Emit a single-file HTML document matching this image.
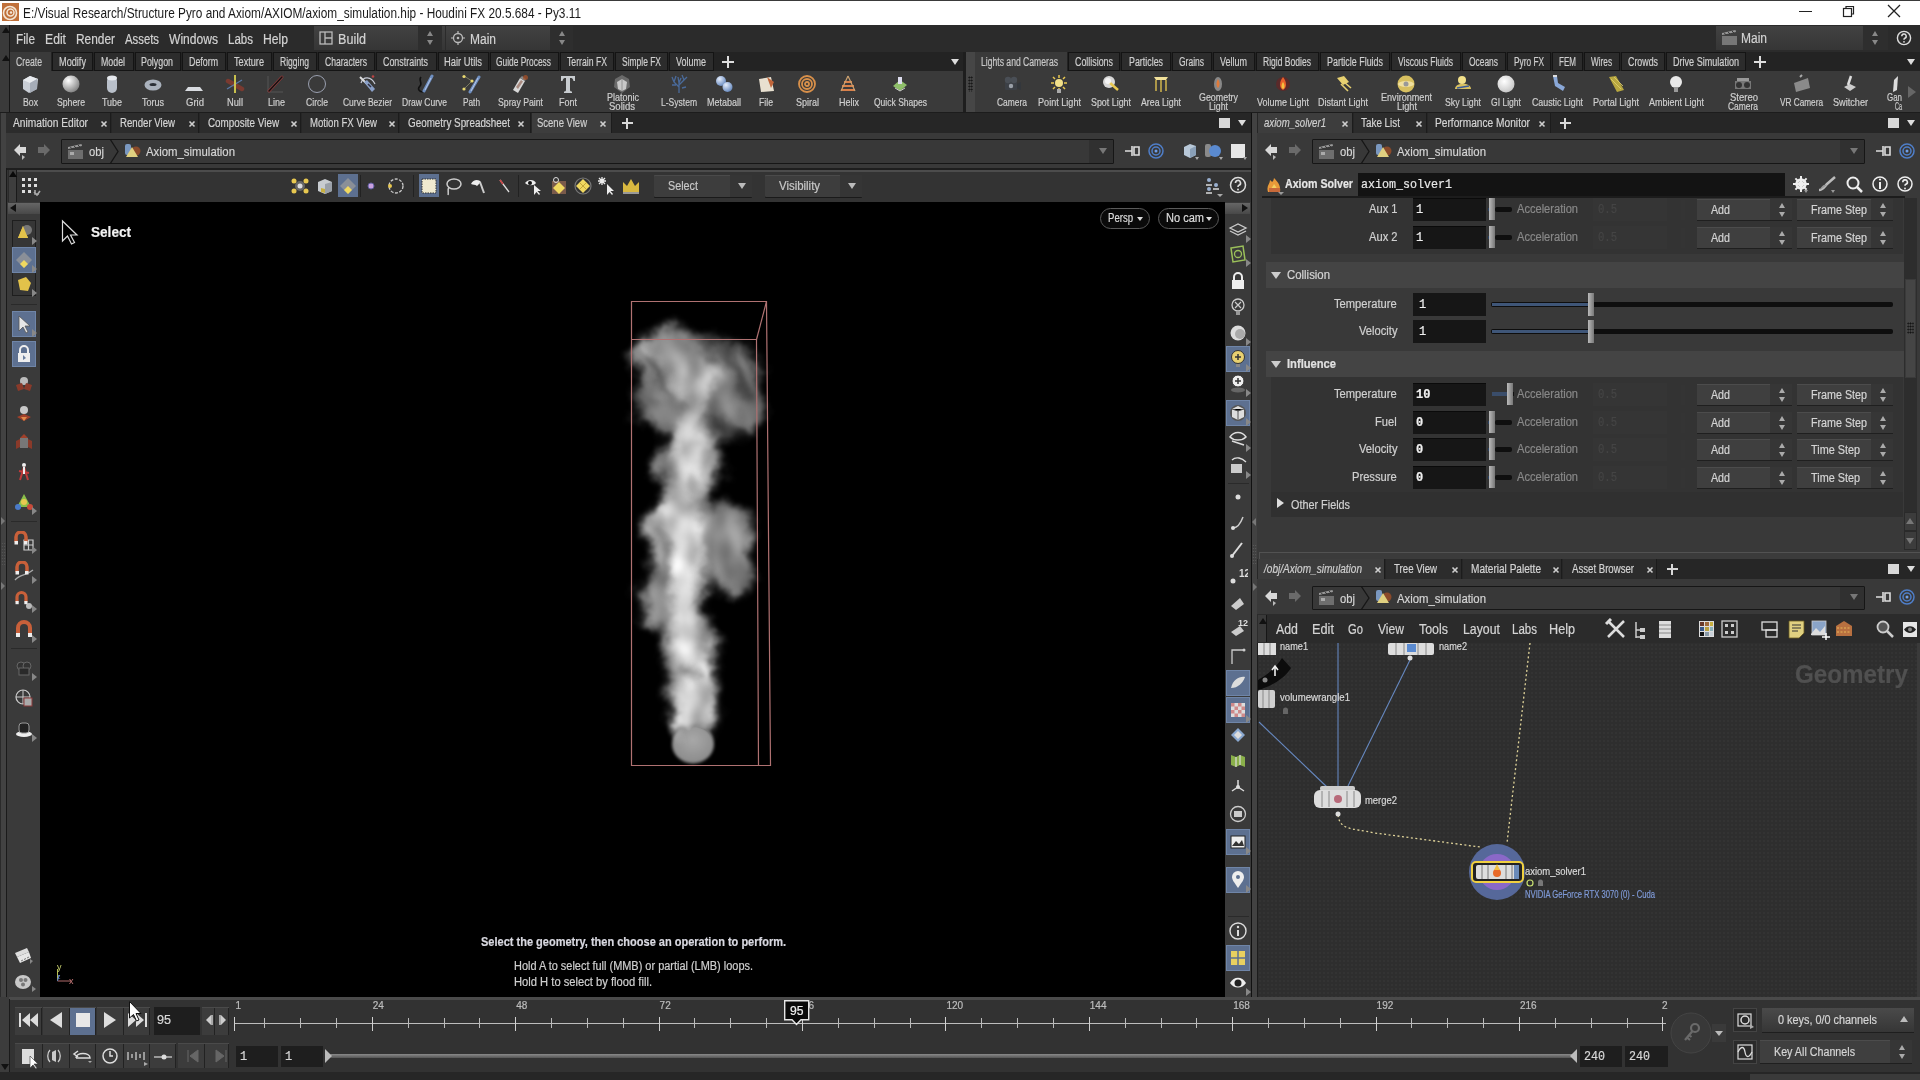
<!DOCTYPE html><html><head><meta charset="utf-8"><style>
html,body{margin:0;padding:0;width:1920px;height:1080px;overflow:hidden;background:#3a3a3a;font-family:"Liberation Sans",sans-serif}
.a{position:absolute}
.t{white-space:nowrap;transform-origin:0 50%;-webkit-text-stroke:0.2px currentColor}
.tri-up{width:0;height:0;border-left:4px solid transparent;border-right:4px solid transparent;border-bottom:6px solid #111}
.tri-dn{width:0;height:0;border-left:4px solid transparent;border-right:4px solid transparent;border-top:6px solid #111}
</style></head><body>
<div class="a" style="left:0px;top:0px;width:1920px;height:25px;background:#ffffff;"></div>
<div class="a" style="left:0px;top:0px;width:1920px;height:1px;background:#3a3a3a;"></div>
<svg class="a" style="left:2px;top:3px" width="17" height="18" viewBox="0 0 17 18"><rect width="17" height="18" fill="#c0703a"/><circle cx="8" cy="10" r="6.5" fill="none" stroke="#f3e6d6" stroke-width="1.6"/><circle cx="8.5" cy="9.5" r="3.5" fill="none" stroke="#f3e6d6" stroke-width="1.5"/><circle cx="9" cy="9.5" r="1.2" fill="#f3e6d6"/></svg>
<div class="a t" style="left:23.0px;top:4.5px;font-size:14px;line-height:16px;color:#1a1a1a;font-weight:normal;font-style:normal;font-family:'Liberation Sans', sans-serif;transform:scaleX(0.8453);-webkit-text-stroke:0;">E:/Visual Research/Structure Pyro and Axiom/AXIOM/axiom_simulation.hip - Houdini FX 20.5.684 - Py3.11</div>
<div class="a" style="left:1799px;top:11px;width:13px;height:1px;background:#222;"></div>
<svg class="a" style="left:1840px;top:3px" width="16" height="16" viewBox="0 0 16 16"><rect x="3.5" y="5.5" width="8" height="8" fill="none" stroke="#222" stroke-width="1.2"/><path d="M6 5.5V3.5h7.5V11h-2" fill="none" stroke="#222" stroke-width="1.2"/></svg>
<svg class="a" style="left:1886px;top:3px" width="16" height="16" viewBox="0 0 16 16"><path d="M2 2L14 14M14 2L2 14" stroke="#222" stroke-width="1.3"/></svg>
<div class="a" style="left:0px;top:25px;width:1920px;height:27px;background:#2b2b2b;"></div>
<div class="a" style="left:0px;top:25px;width:9px;height:27px;background:#3a3a3a;"></div>
<div class="a" style="left:9px;top:25px;width:1px;height:27px;background:#161616;"></div>
<div class="a tri-up" style="left:2px;top:27px"></div>
<div class="a t" style="left:16.0px;top:31.0px;font-size:14px;line-height:16px;color:#d2d2d2;font-weight:normal;font-style:normal;font-family:'Liberation Sans', sans-serif;transform:scaleX(0.8423);">File</div>
<div class="a t" style="left:45.0px;top:31.0px;font-size:14px;line-height:16px;color:#d2d2d2;font-weight:normal;font-style:normal;font-family:'Liberation Sans', sans-serif;transform:scaleX(0.8705);">Edit</div>
<div class="a t" style="left:76.0px;top:31.0px;font-size:14px;line-height:16px;color:#d2d2d2;font-weight:normal;font-style:normal;font-family:'Liberation Sans', sans-serif;transform:scaleX(0.8494);">Render</div>
<div class="a t" style="left:125.0px;top:31.0px;font-size:14px;line-height:16px;color:#d2d2d2;font-weight:normal;font-style:normal;font-family:'Liberation Sans', sans-serif;transform:scaleX(0.8093);">Assets</div>
<div class="a t" style="left:169.0px;top:31.0px;font-size:14px;line-height:16px;color:#d2d2d2;font-weight:normal;font-style:normal;font-family:'Liberation Sans', sans-serif;transform:scaleX(0.8628);">Windows</div>
<div class="a t" style="left:228.0px;top:31.0px;font-size:14px;line-height:16px;color:#d2d2d2;font-weight:normal;font-style:normal;font-family:'Liberation Sans', sans-serif;transform:scaleX(0.8236);">Labs</div>
<div class="a t" style="left:263.0px;top:31.0px;font-size:14px;line-height:16px;color:#d2d2d2;font-weight:normal;font-style:normal;font-family:'Liberation Sans', sans-serif;transform:scaleX(0.8683);">Help</div>
<div class="a" style="left:314px;top:26px;width:131px;height:24px;background:#3c3c3c;background:linear-gradient(#424242,#363636);"></div>
<div class="a" style="left:418px;top:26px;width:24px;height:24px;background:#2e2e2e;"></div>
<svg class="a" style="left:319px;top:31px" width="14" height="14" viewBox="0 0 14 14"><rect x="1" y="1" width="12" height="12" fill="none" stroke="#bbb" stroke-width="1.3"/><path d="M6 1V13M6 7H13" stroke="#bbb" stroke-width="1.3"/></svg>
<div class="a t" style="left:338.0px;top:31.0px;font-size:14px;line-height:16px;color:#d2d2d2;font-weight:normal;font-style:normal;font-family:'Liberation Sans', sans-serif;transform:scaleX(0.8994);">Build</div>
<div class="a" style="left:426.5px;top:31px;width:0;height:0;border-left:3.5px solid transparent;border-right:3.5px solid transparent;border-bottom:5px solid #888"></div>
<div class="a" style="left:426.5px;top:40px;width:0;height:0;border-left:3.5px solid transparent;border-right:3.5px solid transparent;border-top:5px solid #888"></div>
<div class="a" style="left:446px;top:26px;width:127px;height:24px;background:#3c3c3c;background:linear-gradient(#424242,#363636);"></div>
<div class="a" style="left:550px;top:26px;width:23px;height:24px;background:#2e2e2e;"></div>
<svg class="a" style="left:451px;top:31px" width="14" height="14" viewBox="0 0 14 14"><circle cx="7" cy="7" r="4.5" fill="none" stroke="#bbb" stroke-width="1.3"/><circle cx="7" cy="7" r="1.3" fill="#bbb"/><path d="M7 0V3M7 11V14M0 7H3M11 7H14" stroke="#bbb" stroke-width="1.2"/></svg>
<div class="a t" style="left:470.0px;top:31.0px;font-size:14px;line-height:16px;color:#d2d2d2;font-weight:normal;font-style:normal;font-family:'Liberation Sans', sans-serif;transform:scaleX(0.8569);">Main</div>
<div class="a" style="left:558.5px;top:31px;width:0;height:0;border-left:3.5px solid transparent;border-right:3.5px solid transparent;border-bottom:5px solid #888"></div>
<div class="a" style="left:558.5px;top:40px;width:0;height:0;border-left:3.5px solid transparent;border-right:3.5px solid transparent;border-top:5px solid #888"></div>
<div class="a" style="left:1716px;top:26px;width:172px;height:24px;background:#3c3c3c;background:linear-gradient(#424242,#363636);"></div>
<div class="a" style="left:1863px;top:26px;width:25px;height:24px;background:#2e2e2e;"></div>
<svg class="a" style="left:1721px;top:29px" width="17" height="17" viewBox="0 0 17 17"><rect x="1" y="7" width="15" height="9" fill="#777"/><path d="M1 6L15 3L14.5 1L1 4Z" fill="#999"/><path d="M3 3.6l2 2.2M7 2.8l2 2.2M11 2l2 2.2" stroke="#333" stroke-width="1"/></svg>
<div class="a t" style="left:1741.0px;top:30.0px;font-size:14px;line-height:16px;color:#d2d2d2;font-weight:normal;font-style:normal;font-family:'Liberation Sans', sans-serif;transform:scaleX(0.8569);">Main</div>
<div class="a" style="left:1871.5px;top:31px;width:0;height:0;border-left:3.5px solid transparent;border-right:3.5px solid transparent;border-bottom:5px solid #888"></div>
<div class="a" style="left:1871.5px;top:40px;width:0;height:0;border-left:3.5px solid transparent;border-right:3.5px solid transparent;border-top:5px solid #888"></div>
<svg class="a" style="left:1896px;top:30px" width="16" height="16" viewBox="0 0 16 16"><circle cx="8" cy="8" r="6.6" fill="none" stroke="#ddd" stroke-width="1.4"/><path d="M5.8 6.2a2.2 2.2 0 1 1 3 2c-.7.3-.8.7-.8 1.5" fill="none" stroke="#ddd" stroke-width="1.5"/><circle cx="8" cy="11.8" r=".9" fill="#ddd"/></svg>
<div class="a" style="left:0px;top:52px;width:1920px;height:19px;background:#232323;"></div>
<div class="a" style="left:0px;top:52px;width:9px;height:61px;background:#3a3a3a;"></div>
<div class="a" style="left:9px;top:52px;width:1px;height:61px;background:#161616;"></div>
<div class="a tri-up" style="left:2px;top:55px"></div>
<div class="a" style="left:10px;top:52px;width:41px;height:19px;background:#3a3a3a;"></div>
<div class="a t" style="left:16.0px;top:55.0px;font-size:12px;line-height:14px;color:#c8c8c8;font-weight:normal;font-style:normal;font-family:'Liberation Sans', sans-serif;transform:scaleX(0.7219);">Create</div>
<div class="a" style="left:52px;top:52px;width:41px;height:19px;background:#2c2c2c;box-shadow:inset 0 0 0 1px #141414;"></div>
<div class="a t" style="left:59.0px;top:55.0px;font-size:12px;line-height:14px;color:#cfcfcf;font-weight:normal;font-style:normal;font-family:'Liberation Sans', sans-serif;transform:scaleX(0.7640);">Modify</div>
<div class="a" style="left:94px;top:52px;width:40px;height:19px;background:#2c2c2c;box-shadow:inset 0 0 0 1px #141414;"></div>
<div class="a t" style="left:101.0px;top:55.0px;font-size:12px;line-height:14px;color:#cfcfcf;font-weight:normal;font-style:normal;font-family:'Liberation Sans', sans-serif;transform:scaleX(0.7344);">Model</div>
<div class="a" style="left:135px;top:52px;width:46px;height:19px;background:#2c2c2c;box-shadow:inset 0 0 0 1px #141414;"></div>
<div class="a t" style="left:141.0px;top:55.0px;font-size:12px;line-height:14px;color:#cfcfcf;font-weight:normal;font-style:normal;font-family:'Liberation Sans', sans-serif;transform:scaleX(0.7380);">Polygon</div>
<div class="a" style="left:182px;top:52px;width:44px;height:19px;background:#2c2c2c;box-shadow:inset 0 0 0 1px #141414;"></div>
<div class="a t" style="left:189.0px;top:55.0px;font-size:12px;line-height:14px;color:#cfcfcf;font-weight:normal;font-style:normal;font-family:'Liberation Sans', sans-serif;transform:scaleX(0.7372);">Deform</div>
<div class="a" style="left:227px;top:52px;width:45px;height:19px;background:#2c2c2c;box-shadow:inset 0 0 0 1px #141414;"></div>
<div class="a t" style="left:234.0px;top:55.0px;font-size:12px;line-height:14px;color:#cfcfcf;font-weight:normal;font-style:normal;font-family:'Liberation Sans', sans-serif;transform:scaleX(0.7624);">Texture</div>
<div class="a" style="left:273px;top:52px;width:44px;height:19px;background:#2c2c2c;box-shadow:inset 0 0 0 1px #141414;"></div>
<div class="a t" style="left:280.0px;top:55.0px;font-size:12px;line-height:14px;color:#cfcfcf;font-weight:normal;font-style:normal;font-family:'Liberation Sans', sans-serif;transform:scaleX(0.7127);">Rigging</div>
<div class="a" style="left:318px;top:52px;width:57px;height:19px;background:#2c2c2c;box-shadow:inset 0 0 0 1px #141414;"></div>
<div class="a t" style="left:325.0px;top:55.0px;font-size:12px;line-height:14px;color:#cfcfcf;font-weight:normal;font-style:normal;font-family:'Liberation Sans', sans-serif;transform:scaleX(0.7157);">Characters</div>
<div class="a" style="left:376px;top:52px;width:61px;height:19px;background:#2c2c2c;box-shadow:inset 0 0 0 1px #141414;"></div>
<div class="a t" style="left:383.0px;top:55.0px;font-size:12px;line-height:14px;color:#cfcfcf;font-weight:normal;font-style:normal;font-family:'Liberation Sans', sans-serif;transform:scaleX(0.7415);">Constraints</div>
<div class="a" style="left:438px;top:52px;width:51px;height:19px;background:#2c2c2c;box-shadow:inset 0 0 0 1px #141414;"></div>
<div class="a t" style="left:444.0px;top:55.0px;font-size:12px;line-height:14px;color:#cfcfcf;font-weight:normal;font-style:normal;font-family:'Liberation Sans', sans-serif;transform:scaleX(0.7808);">Hair Utils</div>
<div class="a" style="left:490px;top:52px;width:69px;height:19px;background:#2c2c2c;box-shadow:inset 0 0 0 1px #141414;"></div>
<div class="a t" style="left:496.0px;top:55.0px;font-size:12px;line-height:14px;color:#cfcfcf;font-weight:normal;font-style:normal;font-family:'Liberation Sans', sans-serif;transform:scaleX(0.6989);">Guide Process</div>
<div class="a" style="left:560px;top:52px;width:54px;height:19px;background:#2c2c2c;box-shadow:inset 0 0 0 1px #141414;"></div>
<div class="a t" style="left:567.0px;top:55.0px;font-size:12px;line-height:14px;color:#cfcfcf;font-weight:normal;font-style:normal;font-family:'Liberation Sans', sans-serif;transform:scaleX(0.7227);">Terrain FX</div>
<div class="a" style="left:615px;top:52px;width:53px;height:19px;background:#2c2c2c;box-shadow:inset 0 0 0 1px #141414;"></div>
<div class="a t" style="left:622.0px;top:55.0px;font-size:12px;line-height:14px;color:#cfcfcf;font-weight:normal;font-style:normal;font-family:'Liberation Sans', sans-serif;transform:scaleX(0.7047);">Simple FX</div>
<div class="a" style="left:669px;top:52px;width:45px;height:19px;background:#2c2c2c;box-shadow:inset 0 0 0 1px #141414;"></div>
<div class="a t" style="left:676.0px;top:55.0px;font-size:12px;line-height:14px;color:#cfcfcf;font-weight:normal;font-style:normal;font-family:'Liberation Sans', sans-serif;transform:scaleX(0.7496);">Volume</div>
<div class="a" style="left:722px;top:61.0px;width:12px;height:2px;background:#ddd"></div>
<div class="a" style="left:727.0px;top:56px;width:2px;height:12px;background:#ddd"></div>
<div class="a tri-dn" style="left:951px;top:59px;border-top-color:#ddd"></div>
<div class="a" style="left:963px;top:52px;width:3px;height:61px;background:#1e1e1e;"></div>
<div class="a" style="left:966px;top:52px;width:9px;height:61px;background:#464646;"></div>
<div class="a" style="left:968px;top:76px;width:5px;height:16px;background-image:radial-gradient(#111 45%,transparent 50%);background-size:2.5px 3px"></div>
<div class="a" style="left:975px;top:52px;width:92px;height:19px;background:#3a3a3a;"></div>
<div class="a t" style="left:981.0px;top:55.0px;font-size:12px;line-height:14px;color:#c8c8c8;font-weight:normal;font-style:normal;font-family:'Liberation Sans', sans-serif;transform:scaleX(0.7171);">Lights and Cameras</div>
<div class="a" style="left:1068px;top:52px;width:52px;height:19px;background:#2c2c2c;box-shadow:inset 0 0 0 1px #141414;"></div>
<div class="a t" style="left:1075.0px;top:55.0px;font-size:12px;line-height:14px;color:#cfcfcf;font-weight:normal;font-style:normal;font-family:'Liberation Sans', sans-serif;transform:scaleX(0.7400);">Collisions</div>
<div class="a" style="left:1121px;top:52px;width:50px;height:19px;background:#2c2c2c;box-shadow:inset 0 0 0 1px #141414;"></div>
<div class="a t" style="left:1129.0px;top:55.0px;font-size:12px;line-height:14px;color:#cfcfcf;font-weight:normal;font-style:normal;font-family:'Liberation Sans', sans-serif;transform:scaleX(0.7389);">Particles</div>
<div class="a" style="left:1172px;top:52px;width:40px;height:19px;background:#2c2c2c;box-shadow:inset 0 0 0 1px #141414;"></div>
<div class="a t" style="left:1179.0px;top:55.0px;font-size:12px;line-height:14px;color:#cfcfcf;font-weight:normal;font-style:normal;font-family:'Liberation Sans', sans-serif;transform:scaleX(0.7074);">Grains</div>
<div class="a" style="left:1213px;top:52px;width:42px;height:19px;background:#2c2c2c;box-shadow:inset 0 0 0 1px #141414;"></div>
<div class="a t" style="left:1220.0px;top:55.0px;font-size:12px;line-height:14px;color:#cfcfcf;font-weight:normal;font-style:normal;font-family:'Liberation Sans', sans-serif;transform:scaleX(0.7496);">Vellum</div>
<div class="a" style="left:1256px;top:52px;width:63px;height:19px;background:#2c2c2c;box-shadow:inset 0 0 0 1px #141414;"></div>
<div class="a t" style="left:1263.0px;top:55.0px;font-size:12px;line-height:14px;color:#cfcfcf;font-weight:normal;font-style:normal;font-family:'Liberation Sans', sans-serif;transform:scaleX(0.7125);">Rigid Bodies</div>
<div class="a" style="left:1320px;top:52px;width:70px;height:19px;background:#2c2c2c;box-shadow:inset 0 0 0 1px #141414;"></div>
<div class="a t" style="left:1327.0px;top:55.0px;font-size:12px;line-height:14px;color:#cfcfcf;font-weight:normal;font-style:normal;font-family:'Liberation Sans', sans-serif;transform:scaleX(0.7432);">Particle Fluids</div>
<div class="a" style="left:1391px;top:52px;width:70px;height:19px;background:#2c2c2c;box-shadow:inset 0 0 0 1px #141414;"></div>
<div class="a t" style="left:1398.0px;top:55.0px;font-size:12px;line-height:14px;color:#cfcfcf;font-weight:normal;font-style:normal;font-family:'Liberation Sans', sans-serif;transform:scaleX(0.7130);">Viscous Fluids</div>
<div class="a" style="left:1462px;top:52px;width:44px;height:19px;background:#2c2c2c;box-shadow:inset 0 0 0 1px #141414;"></div>
<div class="a t" style="left:1469.0px;top:55.0px;font-size:12px;line-height:14px;color:#cfcfcf;font-weight:normal;font-style:normal;font-family:'Liberation Sans', sans-serif;transform:scaleX(0.7013);">Oceans</div>
<div class="a" style="left:1507px;top:52px;width:44px;height:19px;background:#2c2c2c;box-shadow:inset 0 0 0 1px #141414;"></div>
<div class="a t" style="left:1514.0px;top:55.0px;font-size:12px;line-height:14px;color:#cfcfcf;font-weight:normal;font-style:normal;font-family:'Liberation Sans', sans-serif;transform:scaleX(0.6922);">Pyro FX</div>
<div class="a" style="left:1552px;top:52px;width:31px;height:19px;background:#2c2c2c;box-shadow:inset 0 0 0 1px #141414;"></div>
<div class="a t" style="left:1559.0px;top:55.0px;font-size:12px;line-height:14px;color:#cfcfcf;font-weight:normal;font-style:normal;font-family:'Liberation Sans', sans-serif;transform:scaleX(0.6712);">FEM</div>
<div class="a" style="left:1584px;top:52px;width:36px;height:19px;background:#2c2c2c;box-shadow:inset 0 0 0 1px #141414;"></div>
<div class="a t" style="left:1591.0px;top:55.0px;font-size:12px;line-height:14px;color:#cfcfcf;font-weight:normal;font-style:normal;font-family:'Liberation Sans', sans-serif;transform:scaleX(0.6849);">Wires</div>
<div class="a" style="left:1621px;top:52px;width:44px;height:19px;background:#2c2c2c;box-shadow:inset 0 0 0 1px #141414;"></div>
<div class="a t" style="left:1628.0px;top:55.0px;font-size:12px;line-height:14px;color:#cfcfcf;font-weight:normal;font-style:normal;font-family:'Liberation Sans', sans-serif;transform:scaleX(0.7376);">Crowds</div>
<div class="a" style="left:1666px;top:52px;width:80px;height:19px;background:#2c2c2c;box-shadow:inset 0 0 0 1px #141414;"></div>
<div class="a t" style="left:1673.0px;top:55.0px;font-size:12px;line-height:14px;color:#cfcfcf;font-weight:normal;font-style:normal;font-family:'Liberation Sans', sans-serif;transform:scaleX(0.7555);">Drive Simulation</div>
<div class="a" style="left:1754px;top:61.0px;width:12px;height:2px;background:#ddd"></div>
<div class="a" style="left:1759.0px;top:56px;width:2px;height:12px;background:#ddd"></div>
<div class="a tri-dn" style="left:1907px;top:59px;border-top-color:#ddd"></div>
<div class="a" style="left:10px;top:71px;width:953px;height:41px;background:#3a3a3a;"></div>
<div class="a" style="left:975px;top:71px;width:945px;height:41px;background:#3a3a3a;"></div>
<div class="a" style="left:0px;top:112px;width:1920px;height:1px;background:#1c1c1c;"></div>
<svg class="a" style="left:20px;top:74px" width="20" height="20" viewBox="0 0 20 20"><path d="M3 6L10 2L18 5L17 15L9 19L3 15Z" fill="#c9ced6"/><path d="M3 6L10 9L18 5L10 2Z" fill="#e8ebef"/><path d="M10 9V19L17 15V5Z" fill="#a6adb8"/></svg>
<div class="a t" style="left:23.0px;top:96.0px;font-size:11px;line-height:13px;color:#cfcfcf;font-weight:normal;font-style:normal;font-family:'Liberation Sans', sans-serif;transform:scaleX(0.7914);">Box</div>
<svg class="a" style="left:61px;top:74px" width="20" height="20" viewBox="0 0 20 20"><defs><radialGradient id="gs" cx=".35" cy=".3" r=".8"><stop offset="0" stop-color="#fff"/><stop offset="1" stop-color="#777"/></radialGradient></defs><circle cx="10" cy="10" r="8.5" fill="url(#gs)"/></svg>
<div class="a t" style="left:57.0px;top:96.0px;font-size:11px;line-height:13px;color:#cfcfcf;font-weight:normal;font-style:normal;font-family:'Liberation Sans', sans-serif;transform:scaleX(0.7894);">Sphere</div>
<svg class="a" style="left:102px;top:74px" width="20" height="20" viewBox="0 0 20 20"><rect x="5" y="2" width="10" height="17" rx="5" fill="#b9c0ca"/><ellipse cx="10" cy="4" rx="5" ry="2.5" fill="#e6e9ee"/></svg>
<div class="a t" style="left:102.0px;top:96.0px;font-size:11px;line-height:13px;color:#cfcfcf;font-weight:normal;font-style:normal;font-family:'Liberation Sans', sans-serif;transform:scaleX(0.8110);">Tube</div>
<svg class="a" style="left:143px;top:74px" width="20" height="20" viewBox="0 0 20 20"><ellipse cx="10" cy="11" rx="8.5" ry="5.5" fill="#a9b1bc"/><ellipse cx="10" cy="10.5" rx="3.5" ry="1.6" fill="#2a2f36"/></svg>
<div class="a t" style="left:142.0px;top:96.0px;font-size:11px;line-height:13px;color:#cfcfcf;font-weight:normal;font-style:normal;font-family:'Liberation Sans', sans-serif;transform:scaleX(0.8179);">Torus</div>
<svg class="a" style="left:184px;top:74px" width="20" height="20" viewBox="0 0 20 20"><path d="M4 13L16 13L19 17L1 17Z" fill="#d8dbe0"/></svg>
<div class="a t" style="left:186.0px;top:96.0px;font-size:11px;line-height:13px;color:#cfcfcf;font-weight:normal;font-style:normal;font-family:'Liberation Sans', sans-serif;transform:scaleX(0.8662);">Grid</div>
<svg class="a" style="left:225px;top:74px" width="20" height="20" viewBox="0 0 20 20"><path d="M3 7L17 15" stroke="#7a3a30" stroke-width="4.5" stroke-linecap="round"/><path d="M2 15L17 6" stroke="#5a78a8" stroke-width="1.3"/><path d="M10 1V19" stroke="#d8d050" stroke-width="1.8"/></svg>
<div class="a t" style="left:227.0px;top:96.0px;font-size:11px;line-height:13px;color:#cfcfcf;font-weight:normal;font-style:normal;font-family:'Liberation Sans', sans-serif;transform:scaleX(0.8444);">Null</div>
<svg class="a" style="left:266px;top:74px" width="20" height="20" viewBox="0 0 20 20"><path d="M2 2V18H17" fill="none" stroke="#555" stroke-width="1"/><path d="M3 17L16 3" stroke="#8a3a3a" stroke-width="3" stroke-linecap="round"/><path d="M3 17L16 3" stroke="#111" stroke-width="1.4" stroke-linecap="round"/></svg>
<div class="a t" style="left:268.0px;top:96.0px;font-size:11px;line-height:13px;color:#cfcfcf;font-weight:normal;font-style:normal;font-family:'Liberation Sans', sans-serif;transform:scaleX(0.8175);">Line</div>
<svg class="a" style="left:307px;top:74px" width="20" height="20" viewBox="0 0 20 20"><circle cx="10" cy="10" r="8.5" fill="none" stroke="#9aa0b0" stroke-width="1"/></svg>
<div class="a t" style="left:306.0px;top:96.0px;font-size:11px;line-height:13px;color:#cfcfcf;font-weight:normal;font-style:normal;font-family:'Liberation Sans', sans-serif;transform:scaleX(0.7826);">Circle</div>
<svg class="a" style="left:357px;top:74px" width="20" height="20" viewBox="0 0 20 20"><path d="M4 9C6 2 14 2 18 10" fill="none" stroke="#c8ccd8" stroke-width="1.2"/><path d="M3 3L13 13" stroke="#ddd" stroke-width="2"/><path d="M7 8L15 18L18 15L10 6Z" fill="#8aa0c8"/><path d="M11 10L14 13" stroke="#334" stroke-width="1.5"/><circle cx="16" cy="2.5" r="1.3" fill="#b44"/></svg>
<div class="a t" style="left:343.0px;top:96.0px;font-size:11px;line-height:13px;color:#cfcfcf;font-weight:normal;font-style:normal;font-family:'Liberation Sans', sans-serif;transform:scaleX(0.7707);">Curve Bezier</div>
<svg class="a" style="left:415px;top:74px" width="20" height="20" viewBox="0 0 20 20"><path d="M6 3C3 6 8 9 5 12C2 15 4 18 9 18" fill="none" stroke="#111" stroke-width="1.6"/><path d="M9 17L17 2" stroke="#6f8fc0" stroke-width="3" stroke-linecap="round"/><path d="M10 16L16 4" stroke="#b8c8e8" stroke-width="1"/></svg>
<div class="a t" style="left:402.0px;top:96.0px;font-size:11px;line-height:13px;color:#cfcfcf;font-weight:normal;font-style:normal;font-family:'Liberation Sans', sans-serif;transform:scaleX(0.7750);">Draw Curve</div>
<svg class="a" style="left:461px;top:74px" width="20" height="20" viewBox="0 0 20 20"><path d="M3 2L11 7L3 15" fill="none" stroke="#7a7a60" stroke-width="1"/><circle cx="3" cy="2.5" r="1.6" fill="#e8d870"/><circle cx="11" cy="7" r="1.6" fill="#e8d870"/><circle cx="3" cy="15" r="1.6" fill="#e8d870"/><path d="M9 18L18 3" stroke="#6f8fc0" stroke-width="3" stroke-linecap="round"/><path d="M10 17L17 4" stroke="#b8c8e8" stroke-width="1"/></svg>
<div class="a t" style="left:463.0px;top:96.0px;font-size:11px;line-height:13px;color:#cfcfcf;font-weight:normal;font-style:normal;font-family:'Liberation Sans', sans-serif;transform:scaleX(0.7513);">Path</div>
<svg class="a" style="left:510px;top:74px" width="20" height="20" viewBox="0 0 20 20"><path d="M3 16L10 4L15 7L8 19Z" fill="#d8d8d8"/><path d="M6 13L11 6L13 7.5L8 15Z" fill="#a88a80"/><path d="M10 4L15 7L16 5L12 2Z" fill="#888"/><circle cx="15.5" cy="3.5" r="2.5" fill="#a0502a" opacity=".8"/></svg>
<div class="a t" style="left:498.0px;top:96.0px;font-size:11px;line-height:13px;color:#cfcfcf;font-weight:normal;font-style:normal;font-family:'Liberation Sans', sans-serif;transform:scaleX(0.7914);">Spray Paint</div>
<svg class="a" style="left:558px;top:74px" width="20" height="20" viewBox="0 0 20 20"><path d="M3 2H17V7L15.5 7C15 4.5 14 4 12 4V16C12 17 13 17.5 14 17.5V19H6V17.5C7 17.5 8 17 8 16V4C6 4 5 4.5 4.5 7L3 7Z" fill="#c8ccd0"/></svg>
<div class="a t" style="left:559.0px;top:96.0px;font-size:11px;line-height:13px;color:#cfcfcf;font-weight:normal;font-style:normal;font-family:'Liberation Sans', sans-serif;transform:scaleX(0.8179);">Font</div>
<svg class="a" style="left:612px;top:74px" width="20" height="20" viewBox="0 0 20 20"><path d="M10 1L17 5L18 13L10 19L2 13L3 5Z" fill="#6a6a6a"/><path d="M10 5L15 8L14 15L10 17L6 15L5 8Z" fill="#c8c8c8"/><path d="M10 5V17" stroke="#888" stroke-width=".8"/></svg>
<div class="a t" style="left:607.0px;top:90.5px;font-size:11px;line-height:13px;color:#cfcfcf;font-weight:normal;font-style:normal;font-family:'Liberation Sans', sans-serif;transform:scaleX(0.8177);">Platonic</div>
<div class="a t" style="left:609.0px;top:100.0px;font-size:11px;line-height:13px;color:#cfcfcf;font-weight:normal;font-style:normal;font-family:'Liberation Sans', sans-serif;transform:scaleX(0.8678);">Solids</div>
<svg class="a" style="left:669px;top:74px" width="20" height="20" viewBox="0 0 20 20"><path d="M10 19V9M10 13L5 8M10 11L15 6M5 8L3 3M5 8L7 2M15 6L13 1M15 6L18 3M10 9L9 3M10 9L12 4M7 11L3 11M13 14L17 13" stroke="#4a6a9a" stroke-width="1.3" fill="none"/></svg>
<div class="a t" style="left:661.0px;top:96.0px;font-size:11px;line-height:13px;color:#cfcfcf;font-weight:normal;font-style:normal;font-family:'Liberation Sans', sans-serif;transform:scaleX(0.7750);">L-System</div>
<svg class="a" style="left:714px;top:74px" width="20" height="20" viewBox="0 0 20 20"><defs><radialGradient id="gm" cx=".35" cy=".3" r=".8"><stop offset="0" stop-color="#e6eefc"/><stop offset="1" stop-color="#5a7fb8"/></radialGradient></defs><circle cx="7" cy="7" r="5" fill="url(#gm)"/><circle cx="13.5" cy="13" r="5" fill="url(#gm)"/></svg>
<div class="a t" style="left:707.0px;top:96.0px;font-size:11px;line-height:13px;color:#cfcfcf;font-weight:normal;font-style:normal;font-family:'Liberation Sans', sans-serif;transform:scaleX(0.8178);">Metaball</div>
<svg class="a" style="left:756px;top:74px" width="20" height="20" viewBox="0 0 20 20"><path d="M3 5L15 3L18 17L5 18Z" fill="#e8e0d0"/><path d="M11 3L18 8L15 14Z" fill="#c0653a"/></svg>
<div class="a t" style="left:759.0px;top:96.0px;font-size:11px;line-height:13px;color:#cfcfcf;font-weight:normal;font-style:normal;font-family:'Liberation Sans', sans-serif;transform:scaleX(0.7899);">File</div>
<svg class="a" style="left:797px;top:74px" width="20" height="20" viewBox="0 0 20 20"><circle cx="10" cy="10" r="8" fill="none" stroke="#d8904a" stroke-width="1.8"/><circle cx="10" cy="10" r="5" fill="none" stroke="#d8904a" stroke-width="1.8"/><circle cx="10" cy="10" r="2" fill="none" stroke="#d8904a" stroke-width="1.8"/></svg>
<div class="a t" style="left:796.0px;top:96.0px;font-size:11px;line-height:13px;color:#cfcfcf;font-weight:normal;font-style:normal;font-family:'Liberation Sans', sans-serif;transform:scaleX(0.8179);">Spiral</div>
<svg class="a" style="left:838px;top:74px" width="20" height="20" viewBox="0 0 20 20"><path d="M10 2L3 16H17Z" fill="none"/><path d="M6 8H14M4 12H16M3 16H17" stroke="#d8804a" stroke-width="2"/><path d="M10 2L3 17M10 2L17 17" stroke="#caa070" stroke-width="1.2"/></svg>
<div class="a t" style="left:839.0px;top:96.0px;font-size:11px;line-height:13px;color:#cfcfcf;font-weight:normal;font-style:normal;font-family:'Liberation Sans', sans-serif;transform:scaleX(0.8180);">Helix</div>
<svg class="a" style="left:890px;top:74px" width="20" height="20" viewBox="0 0 20 20"><path d="M3 12L10 6L17 11L10 17Z" fill="#8fbf6a"/><path d="M8 3H12V10H8Z" fill="#dde"/><path d="M5 14L10 17L15 14" stroke="#ccc" stroke-width="1" fill="none"/></svg>
<div class="a t" style="left:874.0px;top:96.0px;font-size:11px;line-height:13px;color:#cfcfcf;font-weight:normal;font-style:normal;font-family:'Liberation Sans', sans-serif;transform:scaleX(0.7740);">Quick Shapes</div>
<svg class="a" style="left:1002px;top:74px" width="20" height="20" viewBox="0 0 20 20"><rect x="3" y="8" width="12" height="8" rx="1" fill="#3c4046"/><circle cx="6" cy="6" r="3.2" fill="#4a4f56"/><circle cx="12" cy="6" r="3.2" fill="#4a4f56"/><circle cx="9" cy="12" r="2.2" fill="#9aa0a8"/><path d="M15 10L19 8V16L15 14Z" fill="#33373c"/></svg>
<div class="a t" style="left:997.0px;top:96.0px;font-size:11px;line-height:13px;color:#cfcfcf;font-weight:normal;font-style:normal;font-family:'Liberation Sans', sans-serif;transform:scaleX(0.7669);">Camera</div>
<svg class="a" style="left:1049px;top:74px" width="20" height="20" viewBox="0 0 20 20"><circle cx="10" cy="9" r="4" fill="#f2e08a"/><path d="M10 1V4M10 14V17M2 9H5M15 9H18M4 3L6 5M14 13L16 15M16 3L14 5M4 15L6 13" stroke="#e8c850" stroke-width="1.5"/><rect x="8" y="15" width="4" height="4" fill="#aaa"/></svg>
<div class="a t" style="left:1038.0px;top:96.0px;font-size:11px;line-height:13px;color:#cfcfcf;font-weight:normal;font-style:normal;font-family:'Liberation Sans', sans-serif;transform:scaleX(0.8273);">Point Light</div>
<svg class="a" style="left:1101px;top:74px" width="20" height="20" viewBox="0 0 20 20"><circle cx="8" cy="8" r="6" fill="#d8d8d8"/><path d="M8 8L17 16" stroke="#e8c850" stroke-width="2.5"/><circle cx="7" cy="7" r="3" fill="#f4f4f4"/></svg>
<div class="a t" style="left:1091.0px;top:96.0px;font-size:11px;line-height:13px;color:#cfcfcf;font-weight:normal;font-style:normal;font-family:'Liberation Sans', sans-serif;transform:scaleX(0.8075);">Spot Light</div>
<svg class="a" style="left:1151px;top:74px" width="20" height="20" viewBox="0 0 20 20"><path d="M3 3H17L15 6H5Z" fill="#f0e09a"/><path d="M5 6V17M10 6V18M15 6V17" stroke="#e8c850" stroke-width="1.3"/></svg>
<div class="a t" style="left:1141.0px;top:96.0px;font-size:11px;line-height:13px;color:#cfcfcf;font-weight:normal;font-style:normal;font-family:'Liberation Sans', sans-serif;transform:scaleX(0.7977);">Area Light</div>
<svg class="a" style="left:1208px;top:74px" width="20" height="20" viewBox="0 0 20 20"><ellipse cx="10" cy="10" rx="4" ry="7" fill="#888"/><path d="M10 5C12 8 12 12 10 14C8 12 8 8 10 5Z" fill="#e07a3a"/></svg>
<div class="a t" style="left:1199.0px;top:90.5px;font-size:11px;line-height:13px;color:#cfcfcf;font-weight:normal;font-style:normal;font-family:'Liberation Sans', sans-serif;transform:scaleX(0.8076);">Geometry</div>
<div class="a t" style="left:1209.0px;top:100.0px;font-size:11px;line-height:13px;color:#cfcfcf;font-weight:normal;font-style:normal;font-family:'Liberation Sans', sans-serif;transform:scaleX(0.7966);">Light</div>
<svg class="a" style="left:1273px;top:74px" width="20" height="20" viewBox="0 0 20 20"><circle cx="10" cy="10" r="7" fill="#5a2a2a"/><path d="M10 3C14 8 14 14 10 16C6 14 6 8 10 3Z" fill="#e8602a"/><path d="M10 8C12 11 12 14 10 15C8 14 8 11 10 8Z" fill="#f4c040"/></svg>
<div class="a t" style="left:1257.0px;top:96.0px;font-size:11px;line-height:13px;color:#cfcfcf;font-weight:normal;font-style:normal;font-family:'Liberation Sans', sans-serif;transform:scaleX(0.8177);">Volume Light</div>
<svg class="a" style="left:1333px;top:74px" width="20" height="20" viewBox="0 0 20 20"><path d="M4 4L11 2L16 8L10 11Z" fill="#e6d070"/><path d="M8 10L15 17M11 8L18 14" stroke="#e6d070" stroke-width="1.6"/></svg>
<div class="a t" style="left:1318.0px;top:96.0px;font-size:11px;line-height:13px;color:#cfcfcf;font-weight:normal;font-style:normal;font-family:'Liberation Sans', sans-serif;transform:scaleX(0.8178);">Distant Light</div>
<svg class="a" style="left:1396px;top:74px" width="20" height="20" viewBox="0 0 20 20"><circle cx="10" cy="10" r="8.5" fill="#d8c060"/><ellipse cx="10" cy="10" rx="8" ry="3" fill="#f0e0a0"/><circle cx="10" cy="10" r="2.5" fill="#999"/></svg>
<div class="a t" style="left:1381.0px;top:90.5px;font-size:11px;line-height:13px;color:#cfcfcf;font-weight:normal;font-style:normal;font-family:'Liberation Sans', sans-serif;transform:scaleX(0.8259);">Environment</div>
<div class="a t" style="left:1397.0px;top:100.0px;font-size:11px;line-height:13px;color:#cfcfcf;font-weight:normal;font-style:normal;font-family:'Liberation Sans', sans-serif;transform:scaleX(0.8385);">Light</div>
<svg class="a" style="left:1453px;top:74px" width="20" height="20" viewBox="0 0 20 20"><path d="M2 15C2 8 18 8 18 15Z" fill="#d8c060"/><circle cx="9" cy="6" r="4" fill="#f2e08a"/><path d="M4 14L16 12" stroke="#3a5a9a" stroke-width="1.5"/></svg>
<div class="a t" style="left:1445.0px;top:96.0px;font-size:11px;line-height:13px;color:#cfcfcf;font-weight:normal;font-style:normal;font-family:'Liberation Sans', sans-serif;transform:scaleX(0.7957);">Sky Light</div>
<svg class="a" style="left:1496px;top:74px" width="20" height="20" viewBox="0 0 20 20"><defs><radialGradient id="gg" cx=".4" cy=".35" r=".8"><stop offset="0" stop-color="#fff"/><stop offset="1" stop-color="#bbb"/></radialGradient></defs><circle cx="10" cy="10" r="8.5" fill="url(#gg)"/></svg>
<div class="a t" style="left:1491.0px;top:96.0px;font-size:11px;line-height:13px;color:#cfcfcf;font-weight:normal;font-style:normal;font-family:'Liberation Sans', sans-serif;transform:scaleX(0.7788);">GI Light</div>
<svg class="a" style="left:1547px;top:74px" width="20" height="20" viewBox="0 0 20 20"><path d="M6 2L8 12L16 17L18 13L11 9L10 2Z" fill="#8aa8d8"/><path d="M6 2H10" stroke="#ddd" stroke-width="2"/></svg>
<div class="a t" style="left:1532.0px;top:96.0px;font-size:11px;line-height:13px;color:#cfcfcf;font-weight:normal;font-style:normal;font-family:'Liberation Sans', sans-serif;transform:scaleX(0.8021);">Caustic Light</div>
<svg class="a" style="left:1606px;top:74px" width="20" height="20" viewBox="0 0 20 20"><path d="M3 3L10 2L18 16L11 18Z" fill="#b8a840"/><path d="M5 5L15 15M8 3L17 12" stroke="#e0d070" stroke-width=".8"/></svg>
<div class="a t" style="left:1593.0px;top:96.0px;font-size:11px;line-height:13px;color:#cfcfcf;font-weight:normal;font-style:normal;font-family:'Liberation Sans', sans-serif;transform:scaleX(0.8267);">Portal Light</div>
<svg class="a" style="left:1666px;top:74px" width="20" height="20" viewBox="0 0 20 20"><circle cx="10" cy="8" r="6" fill="#e8e8e8"/><rect x="8" y="13" width="4" height="5" fill="#999"/></svg>
<div class="a t" style="left:1649.0px;top:96.0px;font-size:11px;line-height:13px;color:#cfcfcf;font-weight:normal;font-style:normal;font-family:'Liberation Sans', sans-serif;transform:scaleX(0.8177);">Ambient Light</div>
<svg class="a" style="left:1733px;top:74px" width="20" height="20" viewBox="0 0 20 20"><rect x="2" y="7" width="16" height="8" fill="#777"/><circle cx="6" cy="11" r="3" fill="#333"/><circle cx="14" cy="11" r="3" fill="#333"/><rect x="4" y="4" width="12" height="3" fill="#999"/></svg>
<div class="a t" style="left:1730.0px;top:90.5px;font-size:11px;line-height:13px;color:#cfcfcf;font-weight:normal;font-style:normal;font-family:'Liberation Sans', sans-serif;transform:scaleX(0.8640);">Stereo</div>
<div class="a t" style="left:1728.0px;top:100.0px;font-size:11px;line-height:13px;color:#cfcfcf;font-weight:normal;font-style:normal;font-family:'Liberation Sans', sans-serif;transform:scaleX(0.7669);">Camera</div>
<svg class="a" style="left:1792px;top:74px" width="20" height="20" viewBox="0 0 20 20"><path d="M2 9L16 4L18 14L4 18Z" fill="#8a8a8a"/><path d="M8 3L10 1" stroke="#aaa" stroke-width="2"/></svg>
<div class="a t" style="left:1780.0px;top:96.0px;font-size:11px;line-height:13px;color:#cfcfcf;font-weight:normal;font-style:normal;font-family:'Liberation Sans', sans-serif;transform:scaleX(0.7484);">VR Camera</div>
<svg class="a" style="left:1840px;top:74px" width="20" height="20" viewBox="0 0 20 20"><path d="M4 13L10 10L16 13L10 17Z" fill="#ccc"/><path d="M8 11L11 2" stroke="#ddd" stroke-width="2.5"/></svg>
<div class="a t" style="left:1833.0px;top:96.0px;font-size:11px;line-height:13px;color:#cfcfcf;font-weight:normal;font-style:normal;font-family:'Liberation Sans', sans-serif;transform:scaleX(0.8298);">Switcher</div>
<svg class="a" style="left:1885px;top:74px" width="20" height="20" viewBox="0 0 20 20"><path d="M8 18L9 6L13 2L12 16Z" fill="#ddd"/></svg>
<div class="a t" style="left:1887.0px;top:90.5px;font-size:11px;line-height:13px;color:#cfcfcf;font-weight:normal;font-style:normal;font-family:'Liberation Sans', sans-serif;transform:scaleX(0.7215);">Gan</div>
<div class="a t" style="left:1895.0px;top:100.0px;font-size:11px;line-height:13px;color:#cfcfcf;font-weight:normal;font-style:normal;font-family:'Liberation Sans', sans-serif;transform:scaleX(0.4978);">Ca</div>
<div class="a" style="left:1908px;top:86px;width:0;height:0;border-top:6px solid transparent;border-bottom:6px solid transparent;border-left:8px solid #666"></div>
<div class="a" style="left:0px;top:113px;width:6px;height:967px;background:#424242;"></div>
<div class="a" style="left:0px;top:113px;width:1px;height:884px;background:#2a2a2a;"></div>
<div class="a" style="left:6px;top:113px;width:1px;height:884px;background:#1a1a1a;"></div>
<div class="a" style="left:6px;top:113px;width:1245px;height:20px;background:#262626;"></div>
<div class="a" style="left:6px;top:113px;width:105px;height:20px;background:#2c2c2c;box-shadow:inset -1px 0 0 #1c1c1c;"></div>
<div class="a t" style="left:13.0px;top:116.0px;font-size:12px;line-height:14px;color:#d4d4d4;font-weight:normal;font-style:normal;font-family:'Liberation Sans', sans-serif;transform:scaleX(0.8519);">Animation Editor</div>
<svg class="a" style="left:100px;top:119.5px" width="8" height="8" viewBox="0 0 8 8"><path d="M1.5 1.5L6.5 6.5M6.5 1.5L1.5 6.5" stroke="#cfcfcf" stroke-width="1.6"/></svg>
<div class="a" style="left:112px;top:113px;width:87px;height:20px;background:#2c2c2c;box-shadow:inset -1px 0 0 #1c1c1c;"></div>
<div class="a t" style="left:120.0px;top:116.0px;font-size:12px;line-height:14px;color:#d4d4d4;font-weight:normal;font-style:normal;font-family:'Liberation Sans', sans-serif;transform:scaleX(0.8031);">Render View</div>
<svg class="a" style="left:188px;top:119.5px" width="8" height="8" viewBox="0 0 8 8"><path d="M1.5 1.5L6.5 6.5M6.5 1.5L1.5 6.5" stroke="#cfcfcf" stroke-width="1.6"/></svg>
<div class="a" style="left:200px;top:113px;width:101px;height:20px;background:#2c2c2c;box-shadow:inset -1px 0 0 #1c1c1c;"></div>
<div class="a t" style="left:208.0px;top:116.0px;font-size:12px;line-height:14px;color:#d4d4d4;font-weight:normal;font-style:normal;font-family:'Liberation Sans', sans-serif;transform:scaleX(0.8210);">Composite View</div>
<svg class="a" style="left:290px;top:119.5px" width="8" height="8" viewBox="0 0 8 8"><path d="M1.5 1.5L6.5 6.5M6.5 1.5L1.5 6.5" stroke="#cfcfcf" stroke-width="1.6"/></svg>
<div class="a" style="left:302px;top:113px;width:97px;height:20px;background:#2c2c2c;box-shadow:inset -1px 0 0 #1c1c1c;"></div>
<div class="a t" style="left:310.0px;top:116.0px;font-size:12px;line-height:14px;color:#d4d4d4;font-weight:normal;font-style:normal;font-family:'Liberation Sans', sans-serif;transform:scaleX(0.7994);">Motion FX View</div>
<svg class="a" style="left:388px;top:119.5px" width="8" height="8" viewBox="0 0 8 8"><path d="M1.5 1.5L6.5 6.5M6.5 1.5L1.5 6.5" stroke="#cfcfcf" stroke-width="1.6"/></svg>
<div class="a" style="left:400px;top:113px;width:131px;height:20px;background:#2c2c2c;box-shadow:inset -1px 0 0 #1c1c1c;"></div>
<div class="a t" style="left:408.0px;top:116.0px;font-size:12px;line-height:14px;color:#d4d4d4;font-weight:normal;font-style:normal;font-family:'Liberation Sans', sans-serif;transform:scaleX(0.8222);">Geometry Spreadsheet</div>
<svg class="a" style="left:517px;top:119.5px" width="8" height="8" viewBox="0 0 8 8"><path d="M1.5 1.5L6.5 6.5M6.5 1.5L1.5 6.5" stroke="#cfcfcf" stroke-width="1.6"/></svg>
<div class="a" style="left:532px;top:113px;width:80px;height:20px;background:#3d3d3d;box-shadow:inset -1px 0 0 #1c1c1c;"></div>
<div class="a t" style="left:537.0px;top:116.0px;font-size:12px;line-height:14px;color:#cfcfcf;font-weight:normal;font-style:normal;font-family:'Liberation Sans', sans-serif;transform:scaleX(0.7918);">Scene View</div>
<svg class="a" style="left:599px;top:119.5px" width="8" height="8" viewBox="0 0 8 8"><path d="M1.5 1.5L6.5 6.5M6.5 1.5L1.5 6.5" stroke="#cfcfcf" stroke-width="1.6"/></svg>
<div class="a" style="left:621.5px;top:122.0px;width:11.0px;height:2px;background:#d8d8d8"></div>
<div class="a" style="left:626.0px;top:117.5px;width:2px;height:11.0px;background:#d8d8d8"></div>
<div class="a" style="left:1219px;top:118.0px;width:11px;height:10.0px;background:#d8d8d8;"></div>
<div class="a tri-dn" style="left:1238px;top:120.0px;border-top-color:#ddd"></div>
<div class="a" style="left:1257px;top:113px;width:663px;height:20px;background:#262626;"></div>
<div class="a" style="left:1258px;top:113px;width:95px;height:20px;background:#3d3d3d;box-shadow:inset -1px 0 0 #1c1c1c;"></div>
<div class="a t" style="left:1264.0px;top:116.0px;font-size:12px;line-height:14px;color:#cfcfcf;font-weight:normal;font-style:italic;font-family:'Liberation Sans', sans-serif;transform:scaleX(0.8014);">axiom_solver1</div>
<svg class="a" style="left:1341px;top:119.5px" width="8" height="8" viewBox="0 0 8 8"><path d="M1.5 1.5L6.5 6.5M6.5 1.5L1.5 6.5" stroke="#cfcfcf" stroke-width="1.6"/></svg>
<div class="a" style="left:1354px;top:113px;width:73px;height:20px;background:#2c2c2c;box-shadow:inset -1px 0 0 #1c1c1c;"></div>
<div class="a t" style="left:1361.0px;top:116.0px;font-size:12px;line-height:14px;color:#d4d4d4;font-weight:normal;font-style:normal;font-family:'Liberation Sans', sans-serif;transform:scaleX(0.8236);">Take List</div>
<svg class="a" style="left:1415px;top:119.5px" width="8" height="8" viewBox="0 0 8 8"><path d="M1.5 1.5L6.5 6.5M6.5 1.5L1.5 6.5" stroke="#cfcfcf" stroke-width="1.6"/></svg>
<div class="a" style="left:1428px;top:113px;width:123px;height:20px;background:#2c2c2c;box-shadow:inset -1px 0 0 #1c1c1c;"></div>
<div class="a t" style="left:1435.0px;top:116.0px;font-size:12px;line-height:14px;color:#d4d4d4;font-weight:normal;font-style:normal;font-family:'Liberation Sans', sans-serif;transform:scaleX(0.8479);">Performance Monitor</div>
<svg class="a" style="left:1538px;top:119.5px" width="8" height="8" viewBox="0 0 8 8"><path d="M1.5 1.5L6.5 6.5M6.5 1.5L1.5 6.5" stroke="#cfcfcf" stroke-width="1.6"/></svg>
<div class="a" style="left:1559.5px;top:122.0px;width:11.0px;height:2px;background:#d8d8d8"></div>
<div class="a" style="left:1564.0px;top:117.5px;width:2px;height:11.0px;background:#d8d8d8"></div>
<div class="a" style="left:1888px;top:118.0px;width:11px;height:10.0px;background:#d8d8d8;"></div>
<div class="a tri-dn" style="left:1907px;top:120.0px;border-top-color:#ddd"></div>
<div class="a" style="left:1251px;top:113px;width:6px;height:887px;background:#424242;"></div>
<div class="a" style="left:1251px;top:113px;width:1px;height:887px;background:#111;"></div>
<div class="a" style="left:7px;top:133px;width:1244px;height:35px;background:#393939;"></div>
<div class="a" style="left:6px;top:133px;width:1245px;height:35px;background:#393939;"></div>
<svg class="a" style="left:13px;top:142.5px" width="40" height="18" viewBox="0 0 40 18"><path d="M1 7L7 1V4H13V10H7V13Z" fill="#d8d8d8"/><path d="M9 12L12 14L9 17Z" fill="#bbb"/><path d="M37 7L31 1V4H25V10H31V13Z" fill="#6a6a6a"/></svg>
<div class="a" style="left:61px;top:139px;width:1053px;height:25px;background:#383838;border:1px solid #161616;box-sizing:border-box;border-radius:1px;"></div>
<svg class="a" style="left:67px;top:142.5px" width="17" height="17" viewBox="0 0 17 17"><rect x="1" y="7" width="15" height="9" fill="#6e6e6e"/><path d="M1 6L15 3L14.5 1L1 4Z" fill="#9a9a9a"/><path d="M3 3.6l2 2.2M7 2.8l2 2.2M11 2l2 2.2" stroke="#333" stroke-width="1"/><rect x="3" y="9" width="4" height="3" fill="#aaa"/></svg>
<div class="a t" style="left:89.0px;top:144.3px;font-size:13px;line-height:15px;color:#d4d4d4;font-weight:normal;font-style:normal;font-family:'Liberation Sans', sans-serif;transform:scaleX(0.8647);">obj</div>
<svg class="a" style="left:109px;top:139px" width="10" height="25" viewBox="0 0 10 25" preserveAspectRatio="none"><path d="M1 0L9 12.5L1 25" fill="none" stroke="#161616" stroke-width="1.3"/></svg>
<svg class="a" style="left:123px;top:141.5px" width="18" height="18" viewBox="0 0 18 18"><circle cx="13" cy="9" r="4.5" fill="#8a4a2a"/><rect x="2" y="2" width="6" height="11" rx="2" fill="#7a98c0"/><path d="M9 5L15 15H3Z" fill="#e0d080"/></svg>
<div class="a t" style="left:146.0px;top:144.3px;font-size:13px;line-height:15px;color:#d4d4d4;font-weight:normal;font-style:normal;font-family:'Liberation Sans', sans-serif;transform:scaleX(0.8737);">Axiom_simulation</div>
<div class="a" style="left:1089px;top:140px;width:24px;height:23px;background:#303030;"></div>
<div class="a tri-dn" style="left:1099px;top:147.5px;border-top-color:#777"></div>
<svg class="a" style="left:1124px;top:142.5px" width="16" height="16" viewBox="0 0 16 16"><path d="M1 8H8M8 3V13M10 4H15V12H10Z" stroke="#ddd" stroke-width="1.6" fill="none"/></svg>
<svg class="a" style="left:1148px;top:142.5px" width="16" height="16" viewBox="0 0 16 16"><circle cx="8" cy="8" r="7" fill="none" stroke="#4f7ec8" stroke-width="1.5"/><circle cx="8" cy="8" r="4" fill="none" stroke="#4f7ec8" stroke-width="1.5"/><circle cx="8" cy="8" r="1.5" fill="#6f9ee8"/></svg>
<div class="a" style="left:1257px;top:133px;width:663px;height:35px;background:#393939;"></div>
<div class="a" style="left:1257px;top:133px;width:663px;height:35px;background:#393939;"></div>
<svg class="a" style="left:1264px;top:142.5px" width="40" height="18" viewBox="0 0 40 18"><path d="M1 7L7 1V4H13V10H7V13Z" fill="#d8d8d8"/><path d="M9 12L12 14L9 17Z" fill="#bbb"/><path d="M37 7L31 1V4H25V10H31V13Z" fill="#6a6a6a"/></svg>
<div class="a" style="left:1312px;top:139px;width:553px;height:25px;background:#383838;border:1px solid #161616;box-sizing:border-box;border-radius:1px;"></div>
<svg class="a" style="left:1318px;top:142.5px" width="17" height="17" viewBox="0 0 17 17"><rect x="1" y="7" width="15" height="9" fill="#6e6e6e"/><path d="M1 6L15 3L14.5 1L1 4Z" fill="#9a9a9a"/><path d="M3 3.6l2 2.2M7 2.8l2 2.2M11 2l2 2.2" stroke="#333" stroke-width="1"/><rect x="3" y="9" width="4" height="3" fill="#aaa"/></svg>
<div class="a t" style="left:1340.0px;top:144.3px;font-size:13px;line-height:15px;color:#d4d4d4;font-weight:normal;font-style:normal;font-family:'Liberation Sans', sans-serif;transform:scaleX(0.8647);">obj</div>
<svg class="a" style="left:1360px;top:139px" width="10" height="25" viewBox="0 0 10 25" preserveAspectRatio="none"><path d="M1 0L9 12.5L1 25" fill="none" stroke="#161616" stroke-width="1.3"/></svg>
<svg class="a" style="left:1374px;top:141.5px" width="18" height="18" viewBox="0 0 18 18"><circle cx="13" cy="9" r="4.5" fill="#8a4a2a"/><rect x="2" y="2" width="6" height="11" rx="2" fill="#7a98c0"/><path d="M9 5L15 15H3Z" fill="#e0d080"/></svg>
<div class="a t" style="left:1397.0px;top:144.3px;font-size:13px;line-height:15px;color:#d4d4d4;font-weight:normal;font-style:normal;font-family:'Liberation Sans', sans-serif;transform:scaleX(0.8737);">Axiom_simulation</div>
<div class="a" style="left:1840px;top:140px;width:24px;height:23px;background:#303030;"></div>
<div class="a tri-dn" style="left:1850px;top:147.5px;border-top-color:#777"></div>
<svg class="a" style="left:1875px;top:142.5px" width="16" height="16" viewBox="0 0 16 16"><path d="M1 8H8M8 3V13M10 4H15V12H10Z" stroke="#ddd" stroke-width="1.6" fill="none"/></svg>
<svg class="a" style="left:1899px;top:142.5px" width="16" height="16" viewBox="0 0 16 16"><circle cx="8" cy="8" r="7" fill="none" stroke="#4f7ec8" stroke-width="1.5"/><circle cx="8" cy="8" r="4" fill="none" stroke="#4f7ec8" stroke-width="1.5"/><circle cx="8" cy="8" r="1.5" fill="#6f9ee8"/></svg>
<svg class="a" style="left:1181px;top:142px" width="70" height="20" viewBox="0 0 70 20"><path d="M3 5L9 2L15 4L15 13L9 16L3 13Z" fill="#b8c8d8"/><path d="M9 7V16L15 13V4Z" fill="#8aa0b8"/><path d="M14 15L18 15L16 18Z" fill="#aaa"/><rect x="24" y="2" width="6" height="13" rx="2" fill="#8a8a8a"/><circle cx="34" cy="9" r="6" fill="#5a8ad0"/><path d="M38 15L42 15L40 18Z" fill="#aaa"/><rect x="50" y="2" width="14" height="14" fill="#e6e6e6"/><path d="M62 15L66 15L64 18Z" fill="#aaa"/></svg>
<div class="a" style="left:7px;top:168px;width:1244px;height:34px;background:#333333;"></div>
<div class="a" style="left:7px;top:168px;width:1244px;height:2px;background:#1e1e1e;"></div>
<div class="a" style="left:17px;top:170px;width:1234px;height:1.5px;background:#4c4c4c;"></div>
<div class="a" style="left:8px;top:170px;width:9px;height:32px;background:#3e3e3e;box-shadow:inset -1px 0 0 #1a1a1a, inset 1px 0 0 #2a2a2a;"></div>
<div class="a tri-up" style="left:8.5px;top:171px;border-bottom-color:#0a0a0a"></div>
<svg class="a" style="left:20px;top:176px" width="22" height="22" viewBox="0 0 22 22"><g fill="#ddd"><rect x="2" y="2" width="3" height="3"/><rect x="8" y="2" width="3" height="3"/><rect x="14" y="2" width="3" height="3"/><rect x="2" y="8" width="3" height="3"/><rect x="8" y="8" width="3" height="3"/><rect x="14" y="8" width="3" height="3"/><rect x="2" y="14" width="3" height="3"/><rect x="8" y="14" width="3" height="3"/></g><path d="M15 14V18H19M14 16L17 19L20 15" fill="none" stroke="#aaa" stroke-width="1.6"/></svg>
<div class="a" style="left:338px;top:174px;width:20px;height:23px;background:#5d7090;"></div>
<div class="a" style="left:419px;top:174px;width:20px;height:23px;background:#5d7090;"></div>
<div class="a" style="left:360px;top:175px;width:1px;height:22px;background:#222;"></div>
<div class="a" style="left:413px;top:175px;width:1px;height:22px;background:#222;"></div>
<div class="a" style="left:518px;top:175px;width:1px;height:22px;background:#222;"></div>
<svg class="a" style="left:290px;top:176px" width="20" height="20" viewBox="0 0 20 20"><circle cx="10" cy="10" r="5" fill="#666"/><circle cx="4" cy="5" r="2.5" fill="#e8c850"/><circle cx="16" cy="5" r="2.5" fill="#e8c850"/><circle cx="4" cy="15" r="2.5" fill="#e8c850"/><circle cx="16" cy="15" r="2.5" fill="#e8c850"/><circle cx="10" cy="10" r="2.5" fill="#ddd"/></svg>
<svg class="a" style="left:315px;top:176px" width="20" height="20" viewBox="0 0 20 20"><path d="M3 6L10 3L17 6V15L10 18L3 15Z" fill="#c8ccd0"/><path d="M10 8V18L17 15V6Z" fill="#9aa0a8"/><path d="M6 12L10 13V17L6 16Z" fill="#c8b040"/></svg>
<svg class="a" style="left:338px;top:176px" width="20" height="20" viewBox="0 0 20 20"><path d="M10 2L18 10L10 18L2 10Z" fill="#8a8f98"/><path d="M10 10L14 14L10 18L6 14Z" fill="#f0d860"/></svg>
<svg class="a" style="left:361px;top:176px" width="20" height="20" viewBox="0 0 20 20"><circle cx="10" cy="10" r="3" fill="#c9a0e0" stroke="#6060a0"/></svg>
<svg class="a" style="left:386px;top:176px" width="20" height="20" viewBox="0 0 20 20"><circle cx="10" cy="10" r="7" fill="none" stroke="#ccc" stroke-width="1.3" stroke-dasharray="3 1.5"/><circle cx="4" cy="10" r="2" fill="#e8c850"/></svg>
<svg class="a" style="left:419px;top:176px" width="20" height="20" viewBox="0 0 20 20"><rect x="3" y="3" width="14" height="14" fill="#f0ead0" stroke="#333" stroke-dasharray="1.5 1"/></svg>
<svg class="a" style="left:443px;top:176px" width="20" height="20" viewBox="0 0 20 20"><ellipse cx="11" cy="8" rx="7" ry="5" fill="none" stroke="#ccc" stroke-width="1.5"/><path d="M6 11C4 14 6 17 5 19" stroke="#ccc" stroke-width="1.5" fill="none"/></svg>
<svg class="a" style="left:468px;top:176px" width="20" height="20" viewBox="0 0 20 20"><path d="M3 8C5 3 11 3 13 6L9 10C7 8 5 9 3 8Z" fill="#eee"/><path d="M12 6L16 17" stroke="#ccc" stroke-width="2"/></svg>
<svg class="a" style="left:494px;top:176px" width="20" height="20" viewBox="0 0 20 20"><path d="M6 4L15 16" stroke="#ddd" stroke-width="1.3"/><path d="M6 4L9 8" stroke="#c44" stroke-width="1.5"/></svg>
<svg class="a" style="left:523px;top:176px" width="20" height="20" viewBox="0 0 20 20"><path d="M2 7C5 3 11 3 13 7C11 10 5 10 2 7Z" fill="#eee"/><circle cx="7" cy="7" r="2" fill="#111"/><path d="M11 9V19L13.5 16L16 19L17 18L14.5 15H18Z" fill="#eee"/></svg>
<svg class="a" style="left:549px;top:176px" width="20" height="20" viewBox="0 0 20 20"><rect x="3" y="5" width="14" height="13" fill="#7a5a4a"/><path d="M10 6L16 12L10 18L4 12Z" fill="#f0d860"/><circle cx="7" cy="4" r="2.5" fill="none" stroke="#ddd"/></svg>
<svg class="a" style="left:573px;top:176px" width="20" height="20" viewBox="0 0 20 20"><circle cx="10" cy="10" r="8" fill="#333" stroke="#777" stroke-width="1.2"/><path d="M10 3L17 10L10 17L3 10Z" fill="#f0d860"/><path d="M6.5 6.5L13.5 13.5M13.5 6.5L6.5 13.5" stroke="#b89a30" stroke-width=".8"/></svg>
<svg class="a" style="left:597px;top:176px" width="20" height="20" viewBox="0 0 20 20"><path d="M5 1V9M1 5H9M2 2L8 8M8 2L2 8" stroke="#eee" stroke-width="1.3"/><path d="M10 8V19L12.5 16L15 19L16 18L13.5 15H17Z" fill="#eee"/></svg>
<svg class="a" style="left:621px;top:176px" width="20" height="20" viewBox="0 0 20 20"><path d="M2 17V6L6 10L10 3L14 10L18 6V17Z" fill="#d8b840"/><path d="M2 17H18" stroke="#999" stroke-width="2"/></svg>
<div class="a" style="left:654px;top:175px;width:98px;height:22px;background:#3d3d3d;box-shadow:0 1px 0 #1a1a1a, inset 0 1px 0 #4a4a4a;border-radius:1px;"></div>
<div class="a" style="left:730px;top:175px;width:22px;height:22px;background:#353535;"></div>
<div class="a t" style="left:668.0px;top:178.5px;font-size:12px;line-height:14px;color:#c8c8c8;font-weight:normal;font-style:normal;font-family:'Liberation Sans', sans-serif;transform:scaleX(0.8995);">Select</div>
<div class="a tri-dn" style="left:738px;top:183px;border-top-color:#bbb"></div>
<div class="a" style="left:765px;top:175px;width:97px;height:22px;background:#3d3d3d;box-shadow:0 1px 0 #1a1a1a, inset 0 1px 0 #4a4a4a;border-radius:1px;"></div>
<div class="a" style="left:840px;top:175px;width:22px;height:22px;background:#353535;"></div>
<div class="a t" style="left:779.0px;top:178.5px;font-size:12px;line-height:14px;color:#c8c8c8;font-weight:normal;font-style:normal;font-family:'Liberation Sans', sans-serif;transform:scaleX(0.9507);">Visibility</div>
<div class="a tri-dn" style="left:848px;top:183px;border-top-color:#bbb"></div>
<svg class="a" style="left:1204px;top:176px" width="22" height="22" viewBox="0 0 22 22"><circle cx="5" cy="4" r="2" fill="#9ab0d0"/><path d="M2 9H8" stroke="#ddd" stroke-width="1.5"/><circle cx="12" cy="9" r="2" fill="#9ab0d0"/><path d="M9 13H15" stroke="#ddd" stroke-width="1.5"/><circle cx="5" cy="13" r="2" fill="#9ab0d0"/><path d="M2 17H8" stroke="#ddd" stroke-width="1.5"/><path d="M13 18H19L16 21Z" fill="#aaa"/></svg>
<svg class="a" style="left:1229px;top:176px" width="18" height="18" viewBox="0 0 18 18"><circle cx="9" cy="9" r="7.5" fill="none" stroke="#ddd" stroke-width="1.5"/><path d="M6.5 7a2.5 2.5 0 1 1 3.4 2.3c-.8.3-.9.8-.9 1.7" fill="none" stroke="#ddd" stroke-width="1.7"/><circle cx="9" cy="13.5" r="1" fill="#ddd"/></svg>
<div class="a" style="left:7px;top:202px;width:33px;height:795px;background:#3a3a3a;"></div>
<div class="a" style="left:8px;top:203px;width:32px;height:11px;background:#555;background:linear-gradient(#666,#484848);"></div>
<div class="a" style="left:10px;top:204px;width:0;height:0;border-top:4.5px solid transparent;border-bottom:4.5px solid transparent;border-right:6px solid #111"></div>
<div class="a" style="left:12px;top:220px;width:24px;height:76px;background:#363636;box-shadow:inset 0 0 0 1px #1e1e1e;"></div>
<div class="a" style="left:11px;top:304px;width:26px;height:1px;background:#2a2a2a;"></div>
<div class="a" style="left:1px;top:517px;width:0;height:0;border-top:4px solid transparent;border-bottom:4px solid transparent;border-left:4px solid #777"></div>
<div class="a" style="left:1px;top:582px;width:0;height:0;border-top:4px solid transparent;border-bottom:4px solid transparent;border-left:4px solid #777"></div>
<div class="a" style="left:1px;top:542px;width:5px;height:24px;background-image:radial-gradient(#5a5a5a 40%,transparent 45%);background-size:2.5px 3px"></div>
<div class="a" style="left:11px;top:521px;width:26px;height:1px;background:#2a2a2a;"></div>
<div class="a" style="left:11px;top:648px;width:26px;height:1px;background:#2a2a2a;"></div>
<svg class="a" style="left:14px;top:222px" width="20" height="20" viewBox="0 0 20 20"><path d="M4 16L9 4L14 16Z" fill="#e2c24a"/><circle cx="13" cy="8" r="5" fill="#777"/><path d="M4 16L9 4L14 16Z" fill="#e2c24a"/></svg>
<div class="a" style="left:32px;top:237px;width:0;height:0;border-top:4px solid transparent;border-bottom:4px solid transparent;border-left:5px solid #888"></div>
<div class="a" style="left:12px;top:247px;width:24px;height:26px;background:#5d7090;box-shadow:inset 0 0 0 1px #6f85a8;"></div>
<svg class="a" style="left:14px;top:250px" width="20" height="20" viewBox="0 0 20 20"><path d="M10 2L18 10L10 18L2 10Z" fill="#8a8f98"/><path d="M10 10L14 14L10 18L6 14Z" fill="#f0d860"/></svg>
<div class="a" style="left:32px;top:265px;width:0;height:0;border-top:4px solid transparent;border-bottom:4px solid transparent;border-left:5px solid #888"></div>
<svg class="a" style="left:14px;top:274px" width="20" height="20" viewBox="0 0 20 20"><path d="M4 6L12 3L17 9L14 17L6 16Z" fill="#e2c24a"/></svg>
<div class="a" style="left:32px;top:289px;width:0;height:0;border-top:4px solid transparent;border-bottom:4px solid transparent;border-left:5px solid #888"></div>
<div class="a" style="left:12px;top:311px;width:24px;height:26px;background:#5d7090;box-shadow:inset 0 0 0 1px #6f85a8;"></div>
<svg class="a" style="left:14px;top:314px" width="20" height="20" viewBox="0 0 20 20"><path d="M5 2V17L9 13L12 19L14 18L11 12H16Z" fill="#e6e6e6" stroke="#555" stroke-width=".8"/></svg>
<div class="a" style="left:32px;top:329px;width:0;height:0;border-top:4px solid transparent;border-bottom:4px solid transparent;border-left:5px solid #888"></div>
<div class="a" style="left:12px;top:341px;width:24px;height:26px;background:#5d7090;box-shadow:inset 0 0 0 1px #6f85a8;"></div>
<svg class="a" style="left:14px;top:344px" width="20" height="20" viewBox="0 0 20 20"><rect x="4" y="9" width="12" height="9" fill="#eee"/><path d="M6 9V6a4 4 0 0 1 8 0V9" fill="none" stroke="#eee" stroke-width="2"/><path d="M9 11V16L12 14Z" fill="#6b7f9f"/></svg>
<svg class="a" style="left:14px;top:373px" width="20" height="20" viewBox="0 0 20 20"><circle cx="10" cy="8" r="4" fill="#bbb"/><path d="M2 12L8 10L10 16L4 18Z" fill="#8a3a2a"/><path d="M12 10L18 12L16 18L10 16Z" fill="#8a3a2a"/></svg>
<svg class="a" style="left:14px;top:403px" width="20" height="20" viewBox="0 0 20 20"><circle cx="10" cy="7" r="4" fill="#c8c8c8"/><path d="M3 14L10 11L17 14L10 18Z" fill="#a0402a"/><path d="M7 14L10 18L13 14Z" fill="#e08a4a"/></svg>
<svg class="a" style="left:14px;top:433px" width="20" height="20" viewBox="0 0 20 20"><rect x="6" y="5" width="8" height="10" fill="#777"/><path d="M2 8L6 6V14L2 16ZM18 8L14 6V14L18 16Z" fill="#8a3a2a"/><path d="M10 1L14 5H6Z" fill="#a0402a"/></svg>
<svg class="a" style="left:14px;top:462px" width="20" height="20" viewBox="0 0 20 20"><circle cx="10" cy="3" r="2" fill="#eee"/><path d="M10 5L6 18M10 5L14 18M5 9L15 11" stroke="#c03a3a" stroke-width="2"/><path d="M10 5V12" stroke="#eee" stroke-width="2"/></svg>
<svg class="a" style="left:14px;top:492px" width="20" height="20" viewBox="0 0 20 20"><path d="M10 2L17 15H3Z" fill="#8abf4a"/><circle cx="4" cy="15" r="3" fill="#4a7ac8"/><circle cx="16" cy="15" r="3" fill="#c84a3a"/><circle cx="10" cy="10" r="3" fill="#e8c850"/></svg>
<div class="a" style="left:32px;top:507px;width:0;height:0;border-top:4px solid transparent;border-bottom:4px solid transparent;border-left:5px solid #888"></div>
<svg class="a" style="left:14px;top:531px" width="20" height="20" viewBox="0 0 20 20"><path d="M10 9H19V19H10ZM14.5 9V19M10 14H19" fill="none" stroke="#ccc" stroke-width="1.2"/><path d="M2 11V6a5 5 0 0 1 10 0V11" fill="none" stroke="#c8603a" stroke-width="3.5"/><rect x="0.5" y="10" width="3.5" height="3.5" fill="#eee"/><rect x="10" y="10" width="3.5" height="3.5" fill="#eee"/></svg>
<div class="a" style="left:32px;top:546px;width:0;height:0;border-top:4px solid transparent;border-bottom:4px solid transparent;border-left:5px solid #888"></div>
<svg class="a" style="left:14px;top:561px" width="20" height="20" viewBox="0 0 20 20"><path d="M1 19C6 13 12 15 19 9" fill="none" stroke="#aaa" stroke-width="1.3"/><path d="M3 11V6a5 5 0 0 1 10 0V11" fill="none" stroke="#c8603a" stroke-width="3.5"/><rect x="1.5" y="10" width="3.5" height="3.5" fill="#eee"/><rect x="11" y="10" width="3.5" height="3.5" fill="#eee"/></svg>
<div class="a" style="left:32px;top:576px;width:0;height:0;border-top:4px solid transparent;border-bottom:4px solid transparent;border-left:5px solid #888"></div>
<svg class="a" style="left:14px;top:590px" width="20" height="20" viewBox="0 0 20 20"><circle cx="15" cy="16" r="3" fill="#bbb"/><path d="M3 12V7a4.5 4.5 0 0 1 9 0V12" fill="none" stroke="#c8603a" stroke-width="3.2"/><rect x="1.5" y="11" width="3.2" height="3.2" fill="#eee"/><rect x="10.3" y="11" width="3.2" height="3.2" fill="#eee"/></svg>
<div class="a" style="left:32px;top:605px;width:0;height:0;border-top:4px solid transparent;border-bottom:4px solid transparent;border-left:5px solid #888"></div>
<svg class="a" style="left:14px;top:620px" width="20" height="20" viewBox="0 0 20 20"><path d="M4 14V8a6 6 0 0 1 12 0V14" fill="none" stroke="#c8603a" stroke-width="4"/><rect x="2" y="13" width="4" height="4" fill="#eee"/><rect x="14" y="13" width="4" height="4" fill="#eee"/></svg>
<div class="a" style="left:32px;top:635px;width:0;height:0;border-top:4px solid transparent;border-bottom:4px solid transparent;border-left:5px solid #888"></div>
<svg class="a" style="left:14px;top:658px" width="20" height="20" viewBox="0 0 20 20"><circle cx="7" cy="8" r="4" fill="#333" stroke="#666"/><circle cx="13" cy="8" r="4" fill="#333" stroke="#666"/><rect x="5" y="10" width="10" height="7" fill="#2a2a2a" stroke="#666"/></svg>
<div class="a" style="left:32px;top:673px;width:0;height:0;border-top:4px solid transparent;border-bottom:4px solid transparent;border-left:5px solid #888"></div>
<svg class="a" style="left:14px;top:688px" width="20" height="20" viewBox="0 0 20 20"><circle cx="9" cy="9" r="7" fill="none" stroke="#ccc" stroke-width="1.2"/><path d="M9 2V16M2 9H16" stroke="#ccc" stroke-width="1"/><rect x="10" y="10" width="8" height="8" fill="#aaa" stroke="#8a3a3a"/></svg>
<svg class="a" style="left:14px;top:719px" width="20" height="20" viewBox="0 0 20 20"><ellipse cx="10" cy="15" rx="8" ry="3" fill="#eee"/><rect x="5" y="4" width="10" height="10" rx="3" fill="#222" stroke="#999"/></svg>
<div class="a" style="left:32px;top:734px;width:0;height:0;border-top:4px solid transparent;border-bottom:4px solid transparent;border-left:5px solid #888"></div>
<svg class="a" style="left:13px;top:944px" width="26" height="52" viewBox="0 0 26 52"><path d="M2 9L14 4L16 8L4 13Z" fill="#ddd"/><path d="M4 13L16 8L18 14L7 19Z" fill="#e6e6e6"/><path d="M8 17L10 16M11 15.5L13 14.5M14 14L16 13" stroke="#777" stroke-width="1"/><path d="M17 15L20 17L17 20Z" fill="#888"/><ellipse cx="10" cy="38" rx="8" ry="7" fill="#c8c8c8"/><circle cx="8" cy="36" r="2" fill="#777"/><circle cx="12.5" cy="36" r="2" fill="#777"/><circle cx="10" cy="40.5" r="2" fill="#777"/><path d="M19 42L23 45L19 48Z" fill="#888"/></svg>
<div class="a" style="left:1225px;top:202px;width:26px;height:795px;background:#3a3a3a;"></div>
<div class="a" style="left:1225px;top:203px;width:25px;height:11px;background:#555;background:linear-gradient(#666,#484848);"></div>
<div class="a" style="left:1242px;top:204px;width:0;height:0;border-top:4.5px solid transparent;border-bottom:4.5px solid transparent;border-left:6px solid #111"></div>
<div class="a" style="left:1228px;top:483px;width:21px;height:1px;background:#2a2a2a;"></div>
<div class="a" style="left:1228px;top:848px;width:21px;height:1px;background:#2a2a2a;"></div>
<div class="a" style="left:1228px;top:916px;width:21px;height:1px;background:#2a2a2a;"></div>
<svg class="a" style="left:1228px;top:220px" width="20" height="20" viewBox="0 0 20 20"><path d="M2 8L10 4L18 8L10 12Z" fill="none" stroke="#ccc" stroke-width="1.3"/><path d="M2 11L10 15L18 11" fill="none" stroke="#ccc" stroke-width="1.3"/></svg>
<div class="a" style="left:1246px;top:235px;width:0;height:0;border-top:4px solid transparent;border-bottom:4px solid transparent;border-left:5px solid #888"></div>
<svg class="a" style="left:1228px;top:244px" width="20" height="20" viewBox="0 0 20 20"><path d="M3 4L15 2L17 16L5 18Z" fill="none" stroke="#9bc05a" stroke-width="1.5"/><circle cx="10" cy="10" r="3.5" fill="none" stroke="#9bc05a" stroke-width="1.3"/></svg>
<div class="a" style="left:1246px;top:259px;width:0;height:0;border-top:4px solid transparent;border-bottom:4px solid transparent;border-left:5px solid #888"></div>
<svg class="a" style="left:1228px;top:271px" width="20" height="20" viewBox="0 0 20 20"><rect x="4" y="9" width="12" height="9" fill="#eee"/><path d="M6 9V6a4 4 0 0 1 8 0V9" fill="none" stroke="#eee" stroke-width="2"/></svg>
<svg class="a" style="left:1228px;top:297px" width="20" height="20" viewBox="0 0 20 20"><circle cx="10" cy="8" r="6" fill="none" stroke="#ccc" stroke-width="1.3"/><path d="M7 5L13 11M13 5L7 11" stroke="#ccc" stroke-width="1.2"/><rect x="8" y="14" width="4" height="4" fill="#999"/></svg>
<svg class="a" style="left:1228px;top:323px" width="20" height="20" viewBox="0 0 20 20"><circle cx="10" cy="10" r="7.5" fill="#ddd"/><circle cx="12" cy="11" r="5" fill="#aaa"/></svg>
<div class="a" style="left:1246px;top:338px;width:0;height:0;border-top:4px solid transparent;border-bottom:4px solid transparent;border-left:5px solid #888"></div>
<div class="a" style="left:1226px;top:346px;width:24px;height:26px;background:#5d7090;box-shadow:inset 0 0 0 1px #6f85a8;"></div>
<svg class="a" style="left:1228px;top:349px" width="20" height="20" viewBox="0 0 20 20"><circle cx="10" cy="8" r="6.5" fill="#e8d070" stroke="#333"/><path d="M10 5V11M7 8H13" stroke="#333" stroke-width="1.5"/><rect x="8" y="15" width="4" height="3" fill="#888"/></svg>
<div class="a" style="left:1246px;top:364px;width:0;height:0;border-top:4px solid transparent;border-bottom:4px solid transparent;border-left:5px solid #888"></div>
<svg class="a" style="left:1228px;top:374px" width="20" height="20" viewBox="0 0 20 20"><circle cx="10" cy="7" r="6" fill="#eee" stroke="#333"/><path d="M10 4V10M7 7H13" stroke="#333" stroke-width="1.5"/><ellipse cx="10" cy="16" rx="7" ry="2.5" fill="#666"/></svg>
<div class="a" style="left:1246px;top:389px;width:0;height:0;border-top:4px solid transparent;border-bottom:4px solid transparent;border-left:5px solid #888"></div>
<div class="a" style="left:1226px;top:400px;width:24px;height:26px;background:#5d7090;box-shadow:inset 0 0 0 1px #6f85a8;"></div>
<svg class="a" style="left:1228px;top:403px" width="20" height="20" viewBox="0 0 20 20"><circle cx="10" cy="10" r="8" fill="#555"/><path d="M4 6L10 3L16 6V14L10 17L4 14Z" fill="#ddd"/><path d="M10 8V17M4 6L10 8L16 6" stroke="#555" stroke-width="1"/></svg>
<div class="a" style="left:1246px;top:418px;width:0;height:0;border-top:4px solid transparent;border-bottom:4px solid transparent;border-left:5px solid #888"></div>
<svg class="a" style="left:1228px;top:429px" width="20" height="20" viewBox="0 0 20 20"><path d="M2 8C6 2 14 2 18 8C14 12 6 12 2 8Z" fill="none" stroke="#ddd" stroke-width="1.5"/><path d="M4 12L16 16" stroke="#ddd" stroke-width="1.5"/></svg>
<div class="a" style="left:1246px;top:444px;width:0;height:0;border-top:4px solid transparent;border-bottom:4px solid transparent;border-left:5px solid #888"></div>
<svg class="a" style="left:1228px;top:456px" width="20" height="20" viewBox="0 0 20 20"><path d="M4 4C8 0 14 2 18 6" fill="none" stroke="#ddd" stroke-width="1.3"/><rect x="3" y="8" width="11" height="9" fill="#ccc"/></svg>
<div class="a" style="left:1246px;top:471px;width:0;height:0;border-top:4px solid transparent;border-bottom:4px solid transparent;border-left:5px solid #888"></div>
<svg class="a" style="left:1228px;top:487px" width="20" height="20" viewBox="0 0 20 20"><circle cx="10" cy="10" r="2.5" fill="#ddd"/></svg>
<svg class="a" style="left:1228px;top:513px" width="20" height="20" viewBox="0 0 20 20"><path d="M5 15C8 15 12 12 15 4" fill="none" stroke="#ccc" stroke-width="1.5"/><circle cx="5" cy="15" r="2" fill="#ddd"/></svg>
<svg class="a" style="left:1228px;top:539px" width="20" height="20" viewBox="0 0 20 20"><path d="M4 17L14 4" stroke="#ddd" stroke-width="2"/><circle cx="4" cy="17" r="2" fill="#ddd"/></svg>
<svg class="a" style="left:1228px;top:566px" width="20" height="20" viewBox="0 0 20 20"><text x="11" y="11" font-size="10" font-family="Liberation Sans" font-weight="bold" fill="#ddd">12</text><circle cx="5" cy="15" r="2.5" fill="#ddd"/></svg>
<svg class="a" style="left:1228px;top:592px" width="20" height="20" viewBox="0 0 20 20"><path d="M3 14L12 6L16 12L8 18Z" fill="#ccc"/></svg>
<svg class="a" style="left:1228px;top:618px" width="20" height="20" viewBox="0 0 20 20"><path d="M3 14L12 8L16 13L8 18Z" fill="#ccc"/><text x="10" y="8" font-size="9" font-family="Liberation Sans" font-weight="bold" fill="#ddd">12</text></svg>
<svg class="a" style="left:1228px;top:646px" width="20" height="20" viewBox="0 0 20 20"><path d="M4 18V4H16" fill="none" stroke="#ccc" stroke-width="1.3"/><circle cx="16" cy="4" r="1.5" fill="#ccc"/></svg>
<div class="a" style="left:1226px;top:670px;width:24px;height:26px;background:#5d7090;box-shadow:inset 0 0 0 1px #6f85a8;"></div>
<svg class="a" style="left:1228px;top:673px" width="20" height="20" viewBox="0 0 20 20"><path d="M3 15C5 6 12 3 17 4C15 10 10 15 3 15Z" fill="#ddd"/></svg>
<div class="a" style="left:1226px;top:697px;width:24px;height:26px;background:#5d7090;box-shadow:inset 0 0 0 1px #6f85a8;"></div>
<svg class="a" style="left:1228px;top:700px" width="20" height="20" viewBox="0 0 20 20"><rect x="3" y="3" width="14" height="14" fill="#ddd"/><path d="M3 3h3.5v3.5H3zM10 3h3.5v3.5H10zM6.5 6.5H10V10H6.5zM13.5 6.5H17V10h-3.5zM3 10h3.5v3.5H3zM10 10h3.5v3.5H10zM6.5 13.5H10V17H6.5zM13.5 13.5H17V17h-3.5z" fill="#d08a8a"/></svg>
<div class="a" style="left:1246px;top:715px;width:0;height:0;border-top:4px solid transparent;border-bottom:4px solid transparent;border-left:5px solid #888"></div>
<svg class="a" style="left:1228px;top:725px" width="20" height="20" viewBox="0 0 20 20"><path d="M10 3L17 10L10 17L3 10Z" fill="#8aa8d0"/><path d="M10 6L14 10L10 14L6 10Z" fill="#ddd"/></svg>
<svg class="a" style="left:1228px;top:751px" width="20" height="20" viewBox="0 0 20 20"><path d="M3 4L8 6L12 4L17 6V16L12 14L8 16L3 14Z" fill="#8ab04a"/><path d="M8 6V16M12 4V14" stroke="#ddd" stroke-width="1.2"/></svg>
<svg class="a" style="left:1228px;top:777px" width="20" height="20" viewBox="0 0 20 20"><path d="M10 10V3M10 10L4 14M10 10L16 14" stroke="#ddd" stroke-width="1.5"/><circle cx="10" cy="10" r="2" fill="#ddd"/></svg>
<svg class="a" style="left:1228px;top:804px" width="20" height="20" viewBox="0 0 20 20"><circle cx="10" cy="10" r="7.5" fill="none" stroke="#ccc" stroke-width="1.3"/><rect x="6" y="7" width="8" height="6" fill="#ccc"/></svg>
<div class="a" style="left:1226px;top:829px;width:24px;height:26px;background:#5d7090;box-shadow:inset 0 0 0 1px #6f85a8;"></div>
<svg class="a" style="left:1228px;top:832px" width="20" height="20" viewBox="0 0 20 20"><rect x="3" y="4" width="14" height="12" fill="#eee" stroke="#222"/><path d="M4 14L8 9L11 12L14 8L16 14Z" fill="#333"/></svg>
<div class="a" style="left:1246px;top:847px;width:0;height:0;border-top:4px solid transparent;border-bottom:4px solid transparent;border-left:5px solid #888"></div>
<div class="a" style="left:1226px;top:867px;width:24px;height:26px;background:#5d7090;box-shadow:inset 0 0 0 1px #6f85a8;"></div>
<svg class="a" style="left:1228px;top:870px" width="20" height="20" viewBox="0 0 20 20"><path d="M10 18C5 11 4 9 4 7a6 6 0 0 1 12 0C16 9 15 11 10 18Z" fill="#eee"/><circle cx="10" cy="7" r="2" fill="#5d7090"/></svg>
<div class="a" style="left:1246px;top:885px;width:0;height:0;border-top:4px solid transparent;border-bottom:4px solid transparent;border-left:5px solid #888"></div>
<svg class="a" style="left:1228px;top:921px" width="20" height="20" viewBox="0 0 20 20"><circle cx="10" cy="10" r="8" fill="none" stroke="#ddd" stroke-width="1.4"/><path d="M10 9V15" stroke="#ddd" stroke-width="2"/><circle cx="10" cy="6" r="1.2" fill="#ddd"/></svg>
<div class="a" style="left:1226px;top:945px;width:24px;height:26px;background:#5d7090;box-shadow:inset 0 0 0 1px #6f85a8;"></div>
<svg class="a" style="left:1228px;top:948px" width="20" height="20" viewBox="0 0 20 20"><rect x="3" y="3" width="14" height="14" fill="#e8d060"/><path d="M10 3V17M3 10H17" stroke="#5d7090" stroke-width="1.5"/></svg>
<svg class="a" style="left:1228px;top:973px" width="20" height="20" viewBox="0 0 20 20"><path d="M2 10C6 3 14 3 18 10C14 16 6 16 2 10Z" fill="#eee"/><circle cx="10" cy="10" r="3.5" fill="#222"/></svg>
<div class="a" style="left:1246px;top:988px;width:0;height:0;border-top:4px solid transparent;border-bottom:4px solid transparent;border-left:5px solid #888"></div>
<div class="a" style="left:40px;top:202px;width:1185px;height:795px;background:#000;"></div>
<svg class="a" style="left:60px;top:219px" width="20" height="28" viewBox="0 0 20 28"><path d="M2.5 2V22L7.5 17L11.5 25L14.5 23.5L10.5 16H17Z" fill="#000" stroke="#ddd" stroke-width="1.2"/></svg>
<div class="a t" style="left:91.0px;top:222.5px;font-size:15px;line-height:17px;color:#f2f2f2;font-weight:bold;font-style:normal;font-family:'Liberation Sans', sans-serif;transform:scaleX(0.9052);">Select</div>
<div class="a" style="left:1100px;top:208px;width:48px;height:19px;border:1px solid #5a5a5a;border-radius:11px;background:#0a0a0a"></div>
<div class="a t" style="left:1108.0px;top:211.0px;font-size:12px;line-height:14px;color:#dcdcdc;font-weight:normal;font-style:normal;font-family:'Liberation Sans', sans-serif;transform:scaleX(0.7975);">Persp</div>
<div class="a tri-dn" style="left:1137px;top:217px;border-top-color:#ddd;border-left-width:3.5px;border-right-width:3.5px;border-top-width:4px"></div>
<div class="a" style="left:1158px;top:208px;width:59px;height:19px;border:1px solid #5a5a5a;border-radius:11px;background:#0a0a0a"></div>
<div class="a t" style="left:1166.0px;top:211.0px;font-size:12px;line-height:14px;color:#dcdcdc;font-weight:normal;font-style:normal;font-family:'Liberation Sans', sans-serif;transform:scaleX(0.9192);">No cam</div>
<div class="a tri-dn" style="left:1206px;top:217px;border-top-color:#ddd;border-left-width:3.5px;border-right-width:3.5px;border-top-width:4px"></div>
<svg class="a" style="left:600px;top:290px" width="200" height="490" viewBox="600 290 200 490">
<defs>
<filter id="sm" x="-20%" y="-20%" width="140%" height="140%" color-interpolation-filters="sRGB">
<feGaussianBlur in="SourceGraphic" stdDeviation="5" result="b"/>
<feTurbulence type="fractalNoise" baseFrequency="0.03" numOctaves="4" seed="11" result="n"/>
<feDisplacementMap in="b" in2="n" scale="24" xChannelSelector="R" yChannelSelector="G" result="d"/>
<feTurbulence type="fractalNoise" baseFrequency="0.035 0.025" numOctaves="2" seed="3" result="t"/>
<feColorMatrix in="t" type="matrix" values="1 0 0 0 0  1 0 0 0 0  1 0 0 0 0  0 0 0 0 1" result="tg"/>
<feComposite in="d" in2="tg" operator="arithmetic" k1="0.9" k2="0.55" k3="0" k4="0" result="m"/>
<feGaussianBlur in="m" stdDeviation="0.8"/>
</filter>
</defs>
<defs><filter id="bb" x="-30%" y="-30%" width="160%" height="160%"><feGaussianBlur stdDeviation="1.6"/></filter><radialGradient id="bg1" cx=".5" cy=".4" r=".6"><stop offset="0" stop-color="#a8a8a8"/><stop offset="1" stop-color="#8a8a8a"/></radialGradient></defs>
<ellipse cx="693" cy="744" rx="21" ry="19.5" fill="url(#bg1)" filter="url(#bb)"/>
<g filter="url(#sm)" style="mix-blend-mode:lighten">
<ellipse cx="697" cy="390" rx="62" ry="55" fill="#707070"/>
<ellipse cx="668" cy="362" rx="32" ry="34" fill="#9a9a9a"/>
<ellipse cx="742" cy="392" rx="20" ry="44" fill="#7a7a7a"/>
<ellipse cx="690" cy="465" rx="33" ry="36" fill="#b0b0b0"/>
<ellipse cx="683" cy="540" rx="38" ry="52" fill="#a8a8a8"/>
<ellipse cx="728" cy="552" rx="24" ry="46" fill="#888"/>
<ellipse cx="663" cy="598" rx="22" ry="32" fill="#959595"/>
<ellipse cx="690" cy="648" rx="28" ry="40" fill="#a0a0a0"/>
<ellipse cx="693" cy="700" rx="24" ry="36" fill="#a0a0a0"/>
<ellipse cx="684" cy="372" rx="34" ry="30" fill="#9a9a9a"/>
<path d="M686 440C698 470 676 500 684 540C692 580 678 610 690 650C700 690 690 720 694 735" stroke="#d8d8d8" stroke-width="32" fill="none"/>
<path d="M700 350C710 380 690 410 692 440" stroke="#b8b8b8" stroke-width="22" fill="none"/>
</g>
<defs><filter id="dk" x="-50%" y="-50%" width="200%" height="200%"><feGaussianBlur stdDeviation="2.5"/></filter></defs>
<g filter="url(#sm)" fill="none" stroke="#000">
<path d="M645 352C655 370 668 385 673 400" stroke-width="7" stroke-opacity=".4"/>
<path d="M724 345C735 365 742 385 744 400" stroke-width="7" stroke-opacity=".35"/>
<ellipse cx="662" cy="440" rx="10" ry="9" fill="#000" fill-opacity=".6" stroke="none"/>
<path d="M712 420C725 425 740 432 748 446" stroke-width="8" stroke-opacity=".45"/>
<path d="M703 566C712 585 720 600 725 620" stroke-width="7" stroke-opacity=".35"/>
<path d="M660 540C668 560 672 585 668 600" stroke-width="4" stroke-opacity=".3"/>
<circle cx="692" cy="672" r="7" fill="#000" fill-opacity=".3" stroke="none"/>
<path d="M683 470C690 490 700 500 710 520" stroke-width="4" stroke-opacity=".3"/>
</g>
</svg>
<svg class="a" style="left:600px;top:290px" width="200" height="490" viewBox="600 290 200 490"><g stroke="#b07272" stroke-width="1.2" fill="none"><path d="M631.5 301.5H766.5L770.5 765.5H631.5Z"/><path d="M631.5 339.5H756.5L758.5 765.5"/><path d="M756.5 339.5L766.5 301.5"/></g></svg>
<svg class="a" style="left:52px;top:960px" width="26" height="26" viewBox="0 0 26 26"><path d="M5.5 21V9" stroke="#b8c050" stroke-width="1"/><path d="M5.5 21H19" stroke="#b06a6a" stroke-width="1"/><path d="M5.5 21L7 15" stroke="#5a7ab8" stroke-width="1"/><text x="5" y="10" font-size="9" fill="#c8d070" font-family="Liberation Sans">y</text><text x="5" y="19" font-size="7" fill="#6a8ac8" font-family="Liberation Sans">z</text><text x="17" y="24" font-size="9" fill="#c87a7a" font-family="Liberation Sans">x</text></svg>
<div class="a t" style="left:481.0px;top:934.5px;font-size:12px;line-height:14px;color:#d8d8e0;font-weight:bold;font-style:normal;font-family:'Liberation Sans', sans-serif;transform:scaleX(0.9174);">Select the geometry, then choose an operation to perform.</div>
<div class="a t" style="left:514.0px;top:959.0px;font-size:12px;line-height:14px;color:#cfcfcf;font-weight:normal;font-style:normal;font-family:'Liberation Sans', sans-serif;transform:scaleX(0.9119);">Hold A to select full (MMB) or partial (LMB) loops.</div>
<div class="a t" style="left:514.0px;top:975.0px;font-size:12px;line-height:14px;color:#cfcfcf;font-weight:normal;font-style:normal;font-family:'Liberation Sans', sans-serif;transform:scaleX(0.9321);">Hold H to select by flood fill.</div>
<div class="a" style="left:1257px;top:168px;width:663px;height:384px;background:#393939;"></div>
<div class="a" style="left:1257px;top:168px;width:663px;height:29px;background:#393939;"></div>
<svg class="a" style="left:1264px;top:174px" width="22" height="22" viewBox="0 0 22 22"><path d="M4 18C2 12 6 10 6 6C8 8 9 9 10 4C14 8 17 12 16 18Z" fill="#e89a3a"/><path d="M7 18C6 14 9 13 10 10C12 13 14 15 13 18Z" fill="#f4d060"/><rect x="5" y="14" width="11" height="4" fill="#c86a3a"/><path d="M14 18H20L17 21Z" fill="#999"/></svg>
<div class="a t" style="left:1285.0px;top:177.0px;font-size:12px;line-height:14px;color:#e6e6e6;font-weight:bold;font-style:normal;font-family:'Liberation Sans', sans-serif;transform:scaleX(0.8867);">Axiom Solver</div>
<div class="a" style="left:1358px;top:173px;width:427px;height:23px;background:#131313;"></div>
<div class="a t" style="left:1361.0px;top:177.3px;font-size:13px;line-height:15px;color:#e8e8e8;font-weight:normal;font-style:normal;font-family:'Liberation Mono', monospace;transform:scaleX(0.8972);">axiom_solver1</div>
<svg class="a" style="left:1791px;top:174px" width="125" height="22" viewBox="0 0 125 22"><g transform="translate(10 10)"><circle r="4.5" fill="none" stroke="#eee" stroke-width="2.5"/><path d="M0 -8V8M-8 0H8M-5.6 -5.6L5.6 5.6M5.6 -5.6L-5.6 5.6" stroke="#eee" stroke-width="2"/></g><path d="M13 16L17 16L15 19Z" fill="#999"/><path d="M28 16C32 16 34 12 36 10L44 3" stroke="#bbb" stroke-width="2.5" fill="none"/><path d="M29 16C30 12 33 10 36 11" fill="#999"/><path d="M40 16L44 16L42 19Z" fill="#999"/><circle cx="62" cy="9" r="5.5" fill="none" stroke="#eee" stroke-width="2"/><path d="M66 13L71 18" stroke="#eee" stroke-width="2.5"/><circle cx="89" cy="10" r="7" fill="none" stroke="#eee" stroke-width="1.5"/><path d="M89 8V15" stroke="#eee" stroke-width="2"/><circle cx="89" cy="5.5" r="1.1" fill="#eee"/><circle cx="114" cy="10" r="7" fill="none" stroke="#eee" stroke-width="1.5"/><path d="M111.8 8.2a2.3 2.3 0 1 1 3.1 2.1c-.7.3-.9.7-.9 1.5" fill="none" stroke="#eee" stroke-width="1.6"/><circle cx="114" cy="14.5" r=".9" fill="#eee"/></svg>
<div class="a" style="left:1262px;top:196px;width:643px;height:2px;background:#1c1c1c;"></div>
<div class="a" style="left:1271px;top:198px;width:632px;height:56px;background:#333333;"></div>
<div class="a t" style="left:1368.5px;top:202.0px;font-size:12px;line-height:14px;color:#d0d0d0;font-weight:normal;font-style:normal;font-family:'Liberation Sans', sans-serif;transform:scaleX(0.9300);">Aux 1</div>
<div class="a" style="left:1413px;top:198px;width:73px;height:23px;background:#161616;box-shadow:inset 0 1px 0 #0a0a0a;"></div>
<div class="a t" style="left:1416.0px;top:203.3px;font-size:12px;line-height:14px;color:#f0f0f0;font-weight:normal;font-style:normal;font-family:'Liberation Mono', monospace;">1</div>
<div class="a" style="left:1488px;top:208px;width:2px;height:3px;background:#2a4060;"></div>
<div class="a" style="left:1489px;top:198px;width:6px;height:22px;background:#9a9a9a;background:linear-gradient(90deg,#bbb,#777);"></div>
<div class="a" style="left:1495px;top:207px;width:17px;height:5px;background:#0f0f0f;border-radius:2px;"></div>
<div class="a t" style="left:1517.0px;top:202.0px;font-size:12px;line-height:14px;color:#888;font-weight:normal;font-style:normal;font-family:'Liberation Sans', sans-serif;transform:scaleX(0.9238);">Acceleration</div>
<div class="a" style="left:1593px;top:198px;width:74px;height:23px;background:#353535;"></div>
<div class="a t" style="left:1598.0px;top:202.8px;font-size:12px;line-height:14px;color:#454545;font-weight:normal;font-style:normal;font-family:'Liberation Mono', monospace;transform:scaleX(0.8794);">0.5</div>
<div class="a" style="left:1681px;top:200px;width:4px;height:20px;background:#343434;"></div>
<div class="a" style="left:1697px;top:199px;width:95px;height:21px;background:#3f3f3f;box-shadow:inset 0 1px 0 #4c4c4c, 0 1px 0 #1f1f1f;"></div>
<div class="a" style="left:1770px;top:199px;width:22px;height:21px;background:#363636;"></div>
<div class="a t" style="left:1711.0px;top:202.5px;font-size:12px;line-height:14px;color:#d4d4d4;font-weight:normal;font-style:normal;font-family:'Liberation Sans', sans-serif;transform:scaleX(0.8899);">Add</div>
<div class="a" style="left:1778.5px;top:202.5px;width:0;height:0;border-left:3.5px solid transparent;border-right:3.5px solid transparent;border-bottom:5px solid #aaa"></div>
<div class="a" style="left:1778.5px;top:211.5px;width:0;height:0;border-left:3.5px solid transparent;border-right:3.5px solid transparent;border-top:5px solid #aaa"></div>
<div class="a" style="left:1797px;top:199px;width:96px;height:21px;background:#3f3f3f;box-shadow:inset 0 1px 0 #4c4c4c, 0 1px 0 #1f1f1f;"></div>
<div class="a" style="left:1871px;top:199px;width:22px;height:21px;background:#363636;"></div>
<div class="a t" style="left:1811.0px;top:202.5px;font-size:12px;line-height:14px;color:#d4d4d4;font-weight:normal;font-style:normal;font-family:'Liberation Sans', sans-serif;transform:scaleX(0.8934);">Frame Step</div>
<div class="a" style="left:1879.5px;top:202.5px;width:0;height:0;border-left:3.5px solid transparent;border-right:3.5px solid transparent;border-bottom:5px solid #aaa"></div>
<div class="a" style="left:1879.5px;top:211.5px;width:0;height:0;border-left:3.5px solid transparent;border-right:3.5px solid transparent;border-top:5px solid #aaa"></div>
<div class="a t" style="left:1368.5px;top:230.0px;font-size:12px;line-height:14px;color:#d0d0d0;font-weight:normal;font-style:normal;font-family:'Liberation Sans', sans-serif;transform:scaleX(0.9300);">Aux 2</div>
<div class="a" style="left:1413px;top:226px;width:73px;height:23px;background:#161616;box-shadow:inset 0 1px 0 #0a0a0a;"></div>
<div class="a t" style="left:1416.0px;top:231.3px;font-size:12px;line-height:14px;color:#f0f0f0;font-weight:normal;font-style:normal;font-family:'Liberation Mono', monospace;">1</div>
<div class="a" style="left:1488px;top:236px;width:2px;height:3px;background:#2a4060;"></div>
<div class="a" style="left:1489px;top:226px;width:6px;height:22px;background:#9a9a9a;background:linear-gradient(90deg,#bbb,#777);"></div>
<div class="a" style="left:1495px;top:235px;width:17px;height:5px;background:#0f0f0f;border-radius:2px;"></div>
<div class="a t" style="left:1517.0px;top:230.0px;font-size:12px;line-height:14px;color:#888;font-weight:normal;font-style:normal;font-family:'Liberation Sans', sans-serif;transform:scaleX(0.9238);">Acceleration</div>
<div class="a" style="left:1593px;top:226px;width:74px;height:23px;background:#353535;"></div>
<div class="a t" style="left:1598.0px;top:230.8px;font-size:12px;line-height:14px;color:#454545;font-weight:normal;font-style:normal;font-family:'Liberation Mono', monospace;transform:scaleX(0.8794);">0.5</div>
<div class="a" style="left:1681px;top:228px;width:4px;height:20px;background:#343434;"></div>
<div class="a" style="left:1697px;top:227px;width:95px;height:21px;background:#3f3f3f;box-shadow:inset 0 1px 0 #4c4c4c, 0 1px 0 #1f1f1f;"></div>
<div class="a" style="left:1770px;top:227px;width:22px;height:21px;background:#363636;"></div>
<div class="a t" style="left:1711.0px;top:230.5px;font-size:12px;line-height:14px;color:#d4d4d4;font-weight:normal;font-style:normal;font-family:'Liberation Sans', sans-serif;transform:scaleX(0.8899);">Add</div>
<div class="a" style="left:1778.5px;top:230.5px;width:0;height:0;border-left:3.5px solid transparent;border-right:3.5px solid transparent;border-bottom:5px solid #aaa"></div>
<div class="a" style="left:1778.5px;top:239.5px;width:0;height:0;border-left:3.5px solid transparent;border-right:3.5px solid transparent;border-top:5px solid #aaa"></div>
<div class="a" style="left:1797px;top:227px;width:96px;height:21px;background:#3f3f3f;box-shadow:inset 0 1px 0 #4c4c4c, 0 1px 0 #1f1f1f;"></div>
<div class="a" style="left:1871px;top:227px;width:22px;height:21px;background:#363636;"></div>
<div class="a t" style="left:1811.0px;top:230.5px;font-size:12px;line-height:14px;color:#d4d4d4;font-weight:normal;font-style:normal;font-family:'Liberation Sans', sans-serif;transform:scaleX(0.8934);">Frame Step</div>
<div class="a" style="left:1879.5px;top:230.5px;width:0;height:0;border-left:3.5px solid transparent;border-right:3.5px solid transparent;border-bottom:5px solid #aaa"></div>
<div class="a" style="left:1879.5px;top:239.5px;width:0;height:0;border-left:3.5px solid transparent;border-right:3.5px solid transparent;border-top:5px solid #aaa"></div>
<div class="a" style="left:1266px;top:262px;width:638px;height:26px;background:#444444;"></div>
<div class="a tri-dn" style="left:1271px;top:272px;border-top-color:#ccc;border-left-width:5px;border-right-width:5px;border-top-width:7px"></div>
<div class="a t" style="left:1287.0px;top:268.0px;font-size:12px;line-height:14px;color:#d4d4d4;font-weight:normal;font-style:normal;font-family:'Liberation Sans', sans-serif;transform:scaleX(0.9482);">Collision</div>
<div class="a" style="left:1266px;top:288px;width:638px;height:56px;background:#393939;"></div>
<div class="a t" style="left:1334.4px;top:297.0px;font-size:12px;line-height:14px;color:#d0d0d0;font-weight:normal;font-style:normal;font-family:'Liberation Sans', sans-serif;transform:scaleX(0.9300);">Temperature</div>
<div class="a" style="left:1413px;top:293px;width:73px;height:23px;background:#161616;"></div>
<div class="a t" style="left:1419.0px;top:297.8px;font-size:12px;line-height:14px;color:#f0f0f0;font-weight:normal;font-style:normal;font-family:'Liberation Mono', monospace;">1</div>
<div class="a" style="left:1491px;top:302px;width:402px;height:5px;background:#0e0e0e;border-radius:2px;"></div>
<div class="a" style="left:1492px;top:303px;width:97px;height:3px;background:#3f5678;"></div>
<div class="a" style="left:1588px;top:293px;width:6px;height:23px;background:#999;background:linear-gradient(90deg,#bbb,#777);"></div>
<div class="a t" style="left:1358.5px;top:324.0px;font-size:12px;line-height:14px;color:#d0d0d0;font-weight:normal;font-style:normal;font-family:'Liberation Sans', sans-serif;transform:scaleX(0.9300);">Velocity</div>
<div class="a" style="left:1413px;top:320px;width:73px;height:23px;background:#161616;"></div>
<div class="a t" style="left:1419.0px;top:324.8px;font-size:12px;line-height:14px;color:#f0f0f0;font-weight:normal;font-style:normal;font-family:'Liberation Mono', monospace;">1</div>
<div class="a" style="left:1491px;top:329px;width:402px;height:5px;background:#0e0e0e;border-radius:2px;"></div>
<div class="a" style="left:1492px;top:330px;width:97px;height:3px;background:#3f5678;"></div>
<div class="a" style="left:1588px;top:320px;width:6px;height:23px;background:#999;background:linear-gradient(90deg,#bbb,#777);"></div>
<div class="a" style="left:1266px;top:351px;width:638px;height:26px;background:#444444;"></div>
<div class="a tri-dn" style="left:1271px;top:361px;border-top-color:#ccc;border-left-width:5px;border-right-width:5px;border-top-width:7px"></div>
<div class="a t" style="left:1287.0px;top:357.0px;font-size:12px;line-height:14px;color:#e0e0e0;font-weight:bold;font-style:normal;font-family:'Liberation Sans', sans-serif;transform:scaleX(0.9303);">Influence</div>
<div class="a" style="left:1271px;top:377px;width:632px;height:115px;background:#333333;"></div>
<div class="a t" style="left:1334.4px;top:387.0px;font-size:12px;line-height:14px;color:#d0d0d0;font-weight:normal;font-style:normal;font-family:'Liberation Sans', sans-serif;transform:scaleX(0.9300);">Temperature</div>
<div class="a" style="left:1413px;top:383px;width:73px;height:23px;background:#161616;box-shadow:inset 0 1px 0 #0a0a0a;"></div>
<div class="a t" style="left:1416.0px;top:388.3px;font-size:12px;line-height:14px;color:#f0f0f0;font-weight:bold;font-style:normal;font-family:'Liberation Mono', monospace;">10</div>
<div class="a" style="left:1492px;top:392px;width:16px;height:4px;background:#3a4d6a;"></div>
<div class="a" style="left:1507px;top:383px;width:6px;height:22px;background:#9a9a9a;background:linear-gradient(90deg,#bbb,#777);"></div>
<div class="a" style="left:1513px;top:392px;width:1px;height:4px;background:#111;"></div>
<div class="a t" style="left:1517.0px;top:387.0px;font-size:12px;line-height:14px;color:#888;font-weight:normal;font-style:normal;font-family:'Liberation Sans', sans-serif;transform:scaleX(0.9238);">Acceleration</div>
<div class="a" style="left:1593px;top:383px;width:74px;height:23px;background:#353535;"></div>
<div class="a t" style="left:1598.0px;top:387.8px;font-size:12px;line-height:14px;color:#454545;font-weight:normal;font-style:normal;font-family:'Liberation Mono', monospace;transform:scaleX(0.8794);">0.5</div>
<div class="a" style="left:1681px;top:385px;width:4px;height:20px;background:#343434;"></div>
<div class="a" style="left:1697px;top:384px;width:95px;height:21px;background:#3f3f3f;box-shadow:inset 0 1px 0 #4c4c4c, 0 1px 0 #1f1f1f;"></div>
<div class="a" style="left:1770px;top:384px;width:22px;height:21px;background:#363636;"></div>
<div class="a t" style="left:1711.0px;top:387.5px;font-size:12px;line-height:14px;color:#d4d4d4;font-weight:normal;font-style:normal;font-family:'Liberation Sans', sans-serif;transform:scaleX(0.8899);">Add</div>
<div class="a" style="left:1778.5px;top:387.5px;width:0;height:0;border-left:3.5px solid transparent;border-right:3.5px solid transparent;border-bottom:5px solid #aaa"></div>
<div class="a" style="left:1778.5px;top:396.5px;width:0;height:0;border-left:3.5px solid transparent;border-right:3.5px solid transparent;border-top:5px solid #aaa"></div>
<div class="a" style="left:1797px;top:384px;width:96px;height:21px;background:#3f3f3f;box-shadow:inset 0 1px 0 #4c4c4c, 0 1px 0 #1f1f1f;"></div>
<div class="a" style="left:1871px;top:384px;width:22px;height:21px;background:#363636;"></div>
<div class="a t" style="left:1811.0px;top:387.5px;font-size:12px;line-height:14px;color:#d4d4d4;font-weight:normal;font-style:normal;font-family:'Liberation Sans', sans-serif;transform:scaleX(0.8934);">Frame Step</div>
<div class="a" style="left:1879.5px;top:387.5px;width:0;height:0;border-left:3.5px solid transparent;border-right:3.5px solid transparent;border-bottom:5px solid #aaa"></div>
<div class="a" style="left:1879.5px;top:396.5px;width:0;height:0;border-left:3.5px solid transparent;border-right:3.5px solid transparent;border-top:5px solid #aaa"></div>
<div class="a t" style="left:1375.3px;top:415.0px;font-size:12px;line-height:14px;color:#d0d0d0;font-weight:normal;font-style:normal;font-family:'Liberation Sans', sans-serif;transform:scaleX(0.9300);">Fuel</div>
<div class="a" style="left:1413px;top:411px;width:73px;height:23px;background:#161616;box-shadow:inset 0 1px 0 #0a0a0a;"></div>
<div class="a t" style="left:1416.0px;top:416.3px;font-size:12px;line-height:14px;color:#f0f0f0;font-weight:bold;font-style:normal;font-family:'Liberation Mono', monospace;">0</div>
<div class="a" style="left:1488px;top:421px;width:2px;height:3px;background:#2a4060;"></div>
<div class="a" style="left:1489px;top:411px;width:6px;height:22px;background:#9a9a9a;background:linear-gradient(90deg,#bbb,#777);"></div>
<div class="a" style="left:1495px;top:420px;width:17px;height:5px;background:#0f0f0f;border-radius:2px;"></div>
<div class="a t" style="left:1517.0px;top:415.0px;font-size:12px;line-height:14px;color:#888;font-weight:normal;font-style:normal;font-family:'Liberation Sans', sans-serif;transform:scaleX(0.9238);">Acceleration</div>
<div class="a" style="left:1593px;top:411px;width:74px;height:23px;background:#353535;"></div>
<div class="a t" style="left:1598.0px;top:415.8px;font-size:12px;line-height:14px;color:#454545;font-weight:normal;font-style:normal;font-family:'Liberation Mono', monospace;transform:scaleX(0.8794);">0.5</div>
<div class="a" style="left:1681px;top:413px;width:4px;height:20px;background:#343434;"></div>
<div class="a" style="left:1697px;top:412px;width:95px;height:21px;background:#3f3f3f;box-shadow:inset 0 1px 0 #4c4c4c, 0 1px 0 #1f1f1f;"></div>
<div class="a" style="left:1770px;top:412px;width:22px;height:21px;background:#363636;"></div>
<div class="a t" style="left:1711.0px;top:415.5px;font-size:12px;line-height:14px;color:#d4d4d4;font-weight:normal;font-style:normal;font-family:'Liberation Sans', sans-serif;transform:scaleX(0.8899);">Add</div>
<div class="a" style="left:1778.5px;top:415.5px;width:0;height:0;border-left:3.5px solid transparent;border-right:3.5px solid transparent;border-bottom:5px solid #aaa"></div>
<div class="a" style="left:1778.5px;top:424.5px;width:0;height:0;border-left:3.5px solid transparent;border-right:3.5px solid transparent;border-top:5px solid #aaa"></div>
<div class="a" style="left:1797px;top:412px;width:96px;height:21px;background:#3f3f3f;box-shadow:inset 0 1px 0 #4c4c4c, 0 1px 0 #1f1f1f;"></div>
<div class="a" style="left:1871px;top:412px;width:22px;height:21px;background:#363636;"></div>
<div class="a t" style="left:1811.0px;top:415.5px;font-size:12px;line-height:14px;color:#d4d4d4;font-weight:normal;font-style:normal;font-family:'Liberation Sans', sans-serif;transform:scaleX(0.8934);">Frame Step</div>
<div class="a" style="left:1879.5px;top:415.5px;width:0;height:0;border-left:3.5px solid transparent;border-right:3.5px solid transparent;border-bottom:5px solid #aaa"></div>
<div class="a" style="left:1879.5px;top:424.5px;width:0;height:0;border-left:3.5px solid transparent;border-right:3.5px solid transparent;border-top:5px solid #aaa"></div>
<div class="a t" style="left:1358.5px;top:442.0px;font-size:12px;line-height:14px;color:#d0d0d0;font-weight:normal;font-style:normal;font-family:'Liberation Sans', sans-serif;transform:scaleX(0.9300);">Velocity</div>
<div class="a" style="left:1413px;top:438px;width:73px;height:23px;background:#161616;box-shadow:inset 0 1px 0 #0a0a0a;"></div>
<div class="a t" style="left:1416.0px;top:443.3px;font-size:12px;line-height:14px;color:#f0f0f0;font-weight:bold;font-style:normal;font-family:'Liberation Mono', monospace;">0</div>
<div class="a" style="left:1488px;top:448px;width:2px;height:3px;background:#2a4060;"></div>
<div class="a" style="left:1489px;top:438px;width:6px;height:22px;background:#9a9a9a;background:linear-gradient(90deg,#bbb,#777);"></div>
<div class="a" style="left:1495px;top:447px;width:17px;height:5px;background:#0f0f0f;border-radius:2px;"></div>
<div class="a t" style="left:1517.0px;top:442.0px;font-size:12px;line-height:14px;color:#888;font-weight:normal;font-style:normal;font-family:'Liberation Sans', sans-serif;transform:scaleX(0.9238);">Acceleration</div>
<div class="a" style="left:1593px;top:438px;width:74px;height:23px;background:#353535;"></div>
<div class="a t" style="left:1598.0px;top:442.8px;font-size:12px;line-height:14px;color:#454545;font-weight:normal;font-style:normal;font-family:'Liberation Mono', monospace;transform:scaleX(0.8794);">0.5</div>
<div class="a" style="left:1681px;top:440px;width:4px;height:20px;background:#343434;"></div>
<div class="a" style="left:1697px;top:439px;width:95px;height:21px;background:#3f3f3f;box-shadow:inset 0 1px 0 #4c4c4c, 0 1px 0 #1f1f1f;"></div>
<div class="a" style="left:1770px;top:439px;width:22px;height:21px;background:#363636;"></div>
<div class="a t" style="left:1711.0px;top:442.5px;font-size:12px;line-height:14px;color:#d4d4d4;font-weight:normal;font-style:normal;font-family:'Liberation Sans', sans-serif;transform:scaleX(0.8899);">Add</div>
<div class="a" style="left:1778.5px;top:442.5px;width:0;height:0;border-left:3.5px solid transparent;border-right:3.5px solid transparent;border-bottom:5px solid #aaa"></div>
<div class="a" style="left:1778.5px;top:451.5px;width:0;height:0;border-left:3.5px solid transparent;border-right:3.5px solid transparent;border-top:5px solid #aaa"></div>
<div class="a" style="left:1797px;top:439px;width:96px;height:21px;background:#3f3f3f;box-shadow:inset 0 1px 0 #4c4c4c, 0 1px 0 #1f1f1f;"></div>
<div class="a" style="left:1871px;top:439px;width:22px;height:21px;background:#363636;"></div>
<div class="a t" style="left:1811.0px;top:442.5px;font-size:12px;line-height:14px;color:#d4d4d4;font-weight:normal;font-style:normal;font-family:'Liberation Sans', sans-serif;transform:scaleX(0.9034);">Time Step</div>
<div class="a" style="left:1879.5px;top:442.5px;width:0;height:0;border-left:3.5px solid transparent;border-right:3.5px solid transparent;border-bottom:5px solid #aaa"></div>
<div class="a" style="left:1879.5px;top:451.5px;width:0;height:0;border-left:3.5px solid transparent;border-right:3.5px solid transparent;border-top:5px solid #aaa"></div>
<div class="a t" style="left:1352.3px;top:470.0px;font-size:12px;line-height:14px;color:#d0d0d0;font-weight:normal;font-style:normal;font-family:'Liberation Sans', sans-serif;transform:scaleX(0.9300);">Pressure</div>
<div class="a" style="left:1413px;top:466px;width:73px;height:23px;background:#161616;box-shadow:inset 0 1px 0 #0a0a0a;"></div>
<div class="a t" style="left:1416.0px;top:471.3px;font-size:12px;line-height:14px;color:#f0f0f0;font-weight:bold;font-style:normal;font-family:'Liberation Mono', monospace;">0</div>
<div class="a" style="left:1488px;top:476px;width:2px;height:3px;background:#2a4060;"></div>
<div class="a" style="left:1489px;top:466px;width:6px;height:22px;background:#9a9a9a;background:linear-gradient(90deg,#bbb,#777);"></div>
<div class="a" style="left:1495px;top:475px;width:17px;height:5px;background:#0f0f0f;border-radius:2px;"></div>
<div class="a t" style="left:1517.0px;top:470.0px;font-size:12px;line-height:14px;color:#888;font-weight:normal;font-style:normal;font-family:'Liberation Sans', sans-serif;transform:scaleX(0.9238);">Acceleration</div>
<div class="a" style="left:1593px;top:466px;width:74px;height:23px;background:#353535;"></div>
<div class="a t" style="left:1598.0px;top:470.8px;font-size:12px;line-height:14px;color:#454545;font-weight:normal;font-style:normal;font-family:'Liberation Mono', monospace;transform:scaleX(0.8794);">0.5</div>
<div class="a" style="left:1681px;top:468px;width:4px;height:20px;background:#343434;"></div>
<div class="a" style="left:1697px;top:467px;width:95px;height:21px;background:#3f3f3f;box-shadow:inset 0 1px 0 #4c4c4c, 0 1px 0 #1f1f1f;"></div>
<div class="a" style="left:1770px;top:467px;width:22px;height:21px;background:#363636;"></div>
<div class="a t" style="left:1711.0px;top:470.5px;font-size:12px;line-height:14px;color:#d4d4d4;font-weight:normal;font-style:normal;font-family:'Liberation Sans', sans-serif;transform:scaleX(0.8899);">Add</div>
<div class="a" style="left:1778.5px;top:470.5px;width:0;height:0;border-left:3.5px solid transparent;border-right:3.5px solid transparent;border-bottom:5px solid #aaa"></div>
<div class="a" style="left:1778.5px;top:479.5px;width:0;height:0;border-left:3.5px solid transparent;border-right:3.5px solid transparent;border-top:5px solid #aaa"></div>
<div class="a" style="left:1797px;top:467px;width:96px;height:21px;background:#3f3f3f;box-shadow:inset 0 1px 0 #4c4c4c, 0 1px 0 #1f1f1f;"></div>
<div class="a" style="left:1871px;top:467px;width:22px;height:21px;background:#363636;"></div>
<div class="a t" style="left:1811.0px;top:470.5px;font-size:12px;line-height:14px;color:#d4d4d4;font-weight:normal;font-style:normal;font-family:'Liberation Sans', sans-serif;transform:scaleX(0.9034);">Time Step</div>
<div class="a" style="left:1879.5px;top:470.5px;width:0;height:0;border-left:3.5px solid transparent;border-right:3.5px solid transparent;border-bottom:5px solid #aaa"></div>
<div class="a" style="left:1879.5px;top:479.5px;width:0;height:0;border-left:3.5px solid transparent;border-right:3.5px solid transparent;border-top:5px solid #aaa"></div>
<div class="a" style="left:1271px;top:492px;width:632px;height:25px;background:#303030;"></div>
<div class="a" style="left:1277px;top:498px;width:0;height:0;border-top:5px solid transparent;border-bottom:5px solid transparent;border-left:7px solid #ddd"></div>
<div class="a t" style="left:1291.0px;top:497.5px;font-size:12px;line-height:14px;color:#d0d0d0;font-weight:normal;font-style:normal;font-family:'Liberation Sans', sans-serif;transform:scaleX(0.9028);">Other Fields</div>
<div class="a" style="left:1904px;top:198px;width:13px;height:314px;background:#2d2d2d;"></div>
<div class="a" style="left:1905px;top:279px;width:11px;height:99px;background:#454545;box-shadow:inset 0 0 0 1px #3a3a3a;"></div>
<div class="a" style="left:1907px;top:322px;width:7px;height:12px;background-image:radial-gradient(#111 45%,transparent 50%);background-size:2.4px 3px"></div>
<div class="a" style="left:1904px;top:512px;width:13px;height:19px;background:#3c3c3c;box-shadow:inset 0 0 0 1px #2a2a2a;"></div>
<div class="a" style="left:1904px;top:531px;width:13px;height:19px;background:#3c3c3c;box-shadow:inset 0 0 0 1px #2a2a2a;"></div>
<div class="a tri-up" style="left:1906px;top:518px;border-bottom-color:#777"></div>
<div class="a tri-dn" style="left:1906px;top:538px;border-top-color:#777"></div>
<div class="a" style="left:1257px;top:550px;width:663px;height:9px;background:#393939;"></div>
<div class="a" style="left:1259px;top:552px;width:661px;height:7px;background:#3b3b3b;box-shadow:inset 0 1px 0 #525252, inset 1px 0 0 #525252;"></div>
<div class="a" style="left:1257px;top:559px;width:663px;height:20px;background:#262626;"></div>
<div class="a" style="left:1258px;top:559px;width:127px;height:20px;background:#3d3d3d;box-shadow:inset -1px 0 0 #1c1c1c;"></div>
<div class="a t" style="left:1264.0px;top:562.0px;font-size:12px;line-height:14px;color:#cfcfcf;font-weight:normal;font-style:italic;font-family:'Liberation Sans', sans-serif;transform:scaleX(0.8397);">/obj/Axiom_simulation</div>
<svg class="a" style="left:1374px;top:565.5px" width="8" height="8" viewBox="0 0 8 8"><path d="M1.5 1.5L6.5 6.5M6.5 1.5L1.5 6.5" stroke="#cfcfcf" stroke-width="1.6"/></svg>
<div class="a" style="left:1386px;top:559px;width:76px;height:20px;background:#2c2c2c;box-shadow:inset -1px 0 0 #1c1c1c;"></div>
<div class="a t" style="left:1394.0px;top:562.0px;font-size:12px;line-height:14px;color:#d4d4d4;font-weight:normal;font-style:normal;font-family:'Liberation Sans', sans-serif;transform:scaleX(0.8060);">Tree View</div>
<svg class="a" style="left:1451px;top:565.5px" width="8" height="8" viewBox="0 0 8 8"><path d="M1.5 1.5L6.5 6.5M6.5 1.5L1.5 6.5" stroke="#cfcfcf" stroke-width="1.6"/></svg>
<div class="a" style="left:1463px;top:559px;width:99px;height:20px;background:#2c2c2c;box-shadow:inset -1px 0 0 #1c1c1c;"></div>
<div class="a t" style="left:1471.0px;top:562.0px;font-size:12px;line-height:14px;color:#d4d4d4;font-weight:normal;font-style:normal;font-family:'Liberation Sans', sans-serif;transform:scaleX(0.8396);">Material Palette</div>
<svg class="a" style="left:1552px;top:565.5px" width="8" height="8" viewBox="0 0 8 8"><path d="M1.5 1.5L6.5 6.5M6.5 1.5L1.5 6.5" stroke="#cfcfcf" stroke-width="1.6"/></svg>
<div class="a" style="left:1563px;top:559px;width:94px;height:20px;background:#2c2c2c;box-shadow:inset -1px 0 0 #1c1c1c;"></div>
<div class="a t" style="left:1572.0px;top:562.0px;font-size:12px;line-height:14px;color:#d4d4d4;font-weight:normal;font-style:normal;font-family:'Liberation Sans', sans-serif;transform:scaleX(0.8015);">Asset Browser</div>
<svg class="a" style="left:1646px;top:565.5px" width="8" height="8" viewBox="0 0 8 8"><path d="M1.5 1.5L6.5 6.5M6.5 1.5L1.5 6.5" stroke="#cfcfcf" stroke-width="1.6"/></svg>
<div class="a" style="left:1666.5px;top:568.0px;width:11.0px;height:2px;background:#d8d8d8"></div>
<div class="a" style="left:1671.0px;top:563.5px;width:2px;height:11.0px;background:#d8d8d8"></div>
<div class="a" style="left:1888px;top:564.0px;width:11px;height:10.0px;background:#d8d8d8;"></div>
<div class="a tri-dn" style="left:1907px;top:566.0px;border-top-color:#ddd"></div>
<div class="a" style="left:1257px;top:579px;width:663px;height:35px;background:#393939;"></div>
<div class="a" style="left:1257px;top:580px;width:663px;height:34px;background:#393939;"></div>
<svg class="a" style="left:1264px;top:589.0px" width="40" height="18" viewBox="0 0 40 18"><path d="M1 7L7 1V4H13V10H7V13Z" fill="#d8d8d8"/><path d="M9 12L12 14L9 17Z" fill="#bbb"/><path d="M37 7L31 1V4H25V10H31V13Z" fill="#6a6a6a"/></svg>
<div class="a" style="left:1312px;top:586px;width:553px;height:24px;background:#383838;border:1px solid #161616;box-sizing:border-box;border-radius:1px;"></div>
<svg class="a" style="left:1318px;top:589.0px" width="17" height="17" viewBox="0 0 17 17"><rect x="1" y="7" width="15" height="9" fill="#6e6e6e"/><path d="M1 6L15 3L14.5 1L1 4Z" fill="#9a9a9a"/><path d="M3 3.6l2 2.2M7 2.8l2 2.2M11 2l2 2.2" stroke="#333" stroke-width="1"/><rect x="3" y="9" width="4" height="3" fill="#aaa"/></svg>
<div class="a t" style="left:1340.0px;top:590.8px;font-size:13px;line-height:15px;color:#d4d4d4;font-weight:normal;font-style:normal;font-family:'Liberation Sans', sans-serif;transform:scaleX(0.8647);">obj</div>
<svg class="a" style="left:1360px;top:586px" width="10" height="24" viewBox="0 0 10 25" preserveAspectRatio="none"><path d="M1 0L9 12.5L1 25" fill="none" stroke="#161616" stroke-width="1.3"/></svg>
<svg class="a" style="left:1374px;top:588.0px" width="18" height="18" viewBox="0 0 18 18"><circle cx="13" cy="9" r="4.5" fill="#8a4a2a"/><rect x="2" y="2" width="6" height="11" rx="2" fill="#7a98c0"/><path d="M9 5L15 15H3Z" fill="#e0d080"/></svg>
<div class="a t" style="left:1397.0px;top:590.8px;font-size:13px;line-height:15px;color:#d4d4d4;font-weight:normal;font-style:normal;font-family:'Liberation Sans', sans-serif;transform:scaleX(0.8737);">Axiom_simulation</div>
<div class="a" style="left:1840px;top:587px;width:24px;height:22px;background:#303030;"></div>
<div class="a tri-dn" style="left:1850px;top:594.0px;border-top-color:#777"></div>
<svg class="a" style="left:1875px;top:589.0px" width="16" height="16" viewBox="0 0 16 16"><path d="M1 8H8M8 3V13M10 4H15V12H10Z" stroke="#ddd" stroke-width="1.6" fill="none"/></svg>
<svg class="a" style="left:1899px;top:589.0px" width="16" height="16" viewBox="0 0 16 16"><circle cx="8" cy="8" r="7" fill="none" stroke="#4f7ec8" stroke-width="1.5"/><circle cx="8" cy="8" r="4" fill="none" stroke="#4f7ec8" stroke-width="1.5"/><circle cx="8" cy="8" r="1.5" fill="#6f9ee8"/></svg>
<div class="a" style="left:1257px;top:614px;width:663px;height:29px;background:#2b2b2b;"></div>
<div class="a" style="left:1258px;top:615px;width:9px;height:27px;background:#3a3a3a;box-shadow:inset -1px 0 0 #161616;"></div>
<div class="a tri-up" style="left:1259px;top:618px"></div>
<div class="a t" style="left:1276.0px;top:621.0px;font-size:14px;line-height:16px;color:#d4d4d4;font-weight:normal;font-style:normal;font-family:'Liberation Sans', sans-serif;transform:scaleX(0.8832);">Add</div>
<div class="a t" style="left:1312.0px;top:621.0px;font-size:14px;line-height:16px;color:#d4d4d4;font-weight:normal;font-style:normal;font-family:'Liberation Sans', sans-serif;transform:scaleX(0.9120);">Edit</div>
<div class="a t" style="left:1348.0px;top:621.0px;font-size:14px;line-height:16px;color:#d4d4d4;font-weight:normal;font-style:normal;font-family:'Liberation Sans', sans-serif;transform:scaleX(0.8032);">Go</div>
<div class="a t" style="left:1378.0px;top:621.0px;font-size:14px;line-height:16px;color:#d4d4d4;font-weight:normal;font-style:normal;font-family:'Liberation Sans', sans-serif;transform:scaleX(0.8640);">View</div>
<div class="a t" style="left:1419.0px;top:621.0px;font-size:14px;line-height:16px;color:#d4d4d4;font-weight:normal;font-style:normal;font-family:'Liberation Sans', sans-serif;transform:scaleX(0.8874);">Tools</div>
<div class="a t" style="left:1463.0px;top:621.0px;font-size:14px;line-height:16px;color:#d4d4d4;font-weight:normal;font-style:normal;font-family:'Liberation Sans', sans-serif;transform:scaleX(0.8803);">Layout</div>
<div class="a t" style="left:1512.0px;top:621.0px;font-size:14px;line-height:16px;color:#d4d4d4;font-weight:normal;font-style:normal;font-family:'Liberation Sans', sans-serif;transform:scaleX(0.8236);">Labs</div>
<div class="a t" style="left:1549.0px;top:621.0px;font-size:14px;line-height:16px;color:#d4d4d4;font-weight:normal;font-style:normal;font-family:'Liberation Sans', sans-serif;transform:scaleX(0.9030);">Help</div>
<svg class="a" style="left:1600px;top:618px" width="320" height="22" viewBox="1600 618 320 22">
<path d="M1608 621L1624 637M1624 621L1608 637" stroke="#ddd" stroke-width="2.5"/><path d="M1606 624L1611 619" stroke="#ddd" stroke-width="3"/>
<path d="M1636 622V638M1636 630H1644M1636 637H1644" stroke="#ccc" stroke-width="1.5"/><rect x="1640" y="628" width="5" height="4" fill="#ccc"/><rect x="1640" y="635" width="5" height="4" fill="#ccc"/>
<rect x="1659" y="621" width="12" height="17" fill="#ddd"/><path d="M1659 625H1671M1659 629H1671M1659 633H1671" stroke="#888" stroke-width="1"/>
<rect x="1699" y="621" width="15" height="16" fill="#ddd"/><g><rect x="1700" y="622" width="4" height="4" fill="#6a3a2a"/><rect x="1705" y="622" width="4" height="4" fill="#a06a3a"/><rect x="1710" y="622" width="3" height="4" fill="#c8b040"/><rect x="1700" y="627" width="4" height="4" fill="#3a5a8a"/><rect x="1705" y="627" width="4" height="4" fill="#b8a040"/><rect x="1710" y="627" width="3" height="4" fill="#8ab0b8"/><rect x="1700" y="632" width="4" height="4" fill="#111"/><rect x="1705" y="632" width="4" height="4" fill="#8a9aa8"/><rect x="1710" y="632" width="3" height="4" fill="#c8d0d8"/></g>
<rect x="1722" y="621" width="15" height="16" fill="none" stroke="#ccc" stroke-width="1.3"/><rect x="1725" y="624" width="3" height="3" fill="#ccc"/><rect x="1731" y="624" width="3" height="3" fill="#ccc"/><rect x="1725" y="631" width="3" height="3" fill="#ccc"/><rect x="1731" y="631" width="3" height="3" fill="#ccc"/>
<rect x="1762" y="622" width="15" height="8" fill="none" stroke="#ddd" stroke-width="1.3"/><rect x="1766" y="630" width="11" height="7" fill="none" stroke="#ddd" stroke-width="1.3"/>
<path d="M1789 621H1804V633L1799 638H1789Z" fill="#e0d080" stroke="#6a5a20" stroke-width=".8"/><path d="M1792 625H1801M1792 628H1801M1792 631H1798" stroke="#333" stroke-width="1"/>
<rect x="1812" y="621" width="14" height="14" fill="#8aa4c8" stroke="#ccc" stroke-width=".8"/><path d="M1811 634L1816 628L1820 632L1825 626V635H1811Z" fill="#ddd"/><path d="M1822 637H1830M1826 633V641" stroke="#fff" stroke-width="1.5"/>
<path d="M1836 626L1844 621L1852 626V636H1836Z" fill="#b87040"/><path d="M1837 628H1851M1837 632H1851" stroke="#d8a050" stroke-width="1.5" stroke-dasharray="2 1.5"/>
<circle cx="1883" cy="627" r="5.5" fill="#555" stroke="#ccc" stroke-width="1.8"/><path d="M1887 631L1893 637" stroke="#ccc" stroke-width="2.5"/>
<rect x="1903" y="622" width="14" height="15" fill="#e6e6e6"/><path d="M1904 629.5C1907 625 1913 625 1916 629.5C1913 634 1907 634 1904 629.5Z" fill="#222"/><circle cx="1910" cy="629.5" r="2" fill="#888"/>
</svg>
<div class="a" style="left:1257px;top:643px;width:663px;height:354px;background:#2e2e2e;"></div>
<div class="a" style="left:1257px;top:643px;width:1px;height:354px;background:#1c1c1c;"></div>
<div class="a" style="left:1258px;top:643px;width:662px;height:354px;background-image:radial-gradient(#343434 35%,transparent 40%);background-size:4px 4px;opacity:.8"></div>
<div class="a t" style="left:1795.0px;top:659.4px;font-size:26px;line-height:30px;color:#505050;font-weight:bold;font-style:normal;font-family:'Liberation Sans', sans-serif;transform:scaleX(0.9310);">Geometry</div>
<svg class="a" style="left:1257px;top:643px" width="663" height="354" viewBox="1257 643 663 354">
<g stroke="#6688c0" stroke-width="1.1" fill="none"><path d="M1338 643V786"/><path d="M1410 660L1348 786"/><path d="M1259 722L1327 787"/></g>
<g stroke="#e0d49a" stroke-width="1.3" fill="none" stroke-dasharray="2 2.5"><path d="M1530 643L1507 843"/><path d="M1338 815C1340 830 1350 828 1375 833L1480 847"/></g>
<circle cx="1338" cy="814" r="2.5" fill="#ddd"/><circle cx="1410" cy="658" r="2.5" fill="#ddd"/>
<circle cx="1497" cy="872" r="28" fill="#56689a"/><circle cx="1497" cy="872" r="18" fill="#8a68c8"/>
<rect x="1472" y="862" width="51" height="20" rx="4" fill="#222" stroke="#f0d040" stroke-width="2"/>
<rect x="1476" y="865" width="43" height="14" rx="2" fill="#ddd"/><path d="M1482 865V879M1488 865V879M1506 865V879M1512 865V879" stroke="#777" stroke-width="1"/><rect x="1514" y="865" width="5" height="14" fill="#6a8ab8"/>
<circle cx="1497" cy="873" r="4" fill="#e86a2a"/><path d="M1494 870L1497 864L1500 870Z" fill="#f4c040"/>
<circle cx="1530" cy="883" r="3" fill="none" stroke="#c8e070" stroke-width="1.2"/><path d="M1538 886V882a2.5 2.5 0 0 1 5 0V886Z" fill="#777"/>
<rect x="1320" y="786" width="35" height="5" rx="2" fill="#ccc"/>
<rect x="1314" y="790" width="47" height="18" rx="6" fill="#ddd"/><path d="M1322 791V807M1329 791V807M1347 791V807M1354 791V807" stroke="#888" stroke-width="1"/><circle cx="1338" cy="799" r="4" fill="#b86a7a"/>
<rect x="1258" y="643" width="18" height="12" fill="#ddd"/><path d="M1264 643V655M1270 643V655" stroke="#888" stroke-width="1"/>
<rect x="1388" y="643" width="46" height="12" rx="2" fill="#ddd"/><path d="M1396 643V655M1404 643V655M1418 643V655M1426 643V655" stroke="#888" stroke-width="1"/><rect x="1407" y="644" width="9" height="8" fill="#5a8ad0"/>
<path d="M1258 680C1266 676 1276 668 1282 658L1291 668C1285 678 1272 686 1258 690Z" fill="#0c0c0c"/><path d="M1275 667V676M1272 670L1275 666L1278 670" stroke="#eee" stroke-width="1.6" fill="none"/><circle cx="1265" cy="680" r="2.5" fill="#888"/>
<rect x="1258" y="690" width="17" height="18" rx="2" fill="#d0d0d0"/><path d="M1263 690V708M1269 690V708" stroke="#888" stroke-width="1"/>
<path d="M1283 714V710a2.5 2.5 0 0 1 5 0V714Z" fill="#666"/>
</svg>
<div class="a t" style="left:1280.0px;top:639.5px;font-size:11px;line-height:13px;color:#d8d8d8;font-weight:normal;font-style:normal;font-family:'Liberation Sans', sans-serif;transform:scaleX(0.8326);">name1</div>
<div class="a t" style="left:1439.0px;top:639.5px;font-size:11px;line-height:13px;color:#d8d8d8;font-weight:normal;font-style:normal;font-family:'Liberation Sans', sans-serif;transform:scaleX(0.8326);">name2</div>
<div class="a t" style="left:1280.0px;top:691.0px;font-size:11px;line-height:13px;color:#d8d8d8;font-weight:normal;font-style:normal;font-family:'Liberation Sans', sans-serif;transform:scaleX(0.8740);">volumewrangle1</div>
<div class="a t" style="left:1365.0px;top:794.0px;font-size:11px;line-height:13px;color:#d8d8d8;font-weight:normal;font-style:normal;font-family:'Liberation Sans', sans-serif;transform:scaleX(0.8581);">merge2</div>
<div class="a t" style="left:1525.0px;top:865.0px;font-size:11px;line-height:13px;color:#d8d8d8;font-weight:normal;font-style:normal;font-family:'Liberation Sans', sans-serif;transform:scaleX(0.8602);">axiom_solver1</div>
<div class="a t" style="left:1525.0px;top:888.5px;font-size:10px;line-height:12px;color:#7f9ad8;font-weight:normal;font-style:normal;font-family:'Liberation Sans', sans-serif;transform:scaleX(0.7653);">NVIDIA GeForce RTX 3070 (0) - Cuda</div>
<div class="a" style="left:1917px;top:643px;width:3px;height:354px;background:#3a3a3a;"></div>
<div class="a" style="left:1252px;top:518px;width:0;height:0;border-top:4px solid transparent;border-bottom:4px solid transparent;border-right:4px solid #777"></div>
<div class="a" style="left:1253px;top:583px;width:0;height:0;border-top:4px solid transparent;border-bottom:4px solid transparent;border-left:4px solid #777"></div>
<div class="a" style="left:1252px;top:544px;width:5px;height:22px;background-image:radial-gradient(#606060 40%,transparent 45%);background-size:2.5px 3px"></div>
<div class="a" style="left:7px;top:997px;width:1913px;height:75px;background:#323232;"></div>
<div class="a" style="left:7px;top:997px;width:1913px;height:3px;background:#4a4a4a;"></div>
<div class="a" style="left:0px;top:1072px;width:1920px;height:8px;background:#262626;"></div>
<div class="a" style="left:1750px;top:1074px;width:170px;height:6px;background:#3a3a3a;"></div>
<div class="a" style="left:0px;top:997px;width:9px;height:75px;background:#3c3c3c;"></div>
<div class="a" style="left:9px;top:999px;width:1px;height:73px;background:#1a1a1a;"></div>
<div class="a tri-dn" style="left:1px;top:1064px"></div>
<div class="a" style="left:15px;top:1007px;width:27px;height:28px;background:#3c3c3c;box-shadow:inset 0 1px 0 #4a4a4a, inset -1px 0 0 #222;"></div>
<div class="a" style="left:43px;top:1007px;width:27px;height:28px;background:#3c3c3c;box-shadow:inset 0 1px 0 #4a4a4a, inset -1px 0 0 #222;"></div>
<div class="a" style="left:70px;top:1007px;width:26px;height:28px;background:#5d7090;box-shadow:inset 0 1px 0 #4a4a4a, inset -1px 0 0 #222;"></div>
<div class="a" style="left:97px;top:1007px;width:27px;height:28px;background:#3c3c3c;box-shadow:inset 0 1px 0 #4a4a4a, inset -1px 0 0 #222;"></div>
<div class="a" style="left:124px;top:1007px;width:26px;height:28px;background:#3c3c3c;box-shadow:inset 0 1px 0 #4a4a4a, inset -1px 0 0 #222;"></div>
<svg class="a" style="left:15px;top:1004px" width="140" height="32" viewBox="15 1004 140 32">
<path d="M20 1013V1027" stroke="#ddd" stroke-width="2"/><path d="M30 1013L22 1020L30 1027Z M38 1013L30 1020L38 1027Z" fill="#ddd"/>
<path d="M62 1012L50 1020L62 1028Z" fill="#ddd"/>
<rect x="76" y="1013" width="14" height="14" fill="#e8e8e8"/>
<path d="M104 1012L116 1020L104 1028Z" fill="#ddd"/>
<path d="M128 1013L136 1020L128 1027Z M136 1013L144 1020L136 1027Z" fill="#ddd"/><path d="M146 1013V1027" stroke="#ddd" stroke-width="2"/>
</svg>
<div class="a" style="left:154px;top:1007px;width:46px;height:28px;background:#1e1e1e;"></div>
<div class="a t" style="left:157.0px;top:1013.0px;font-size:12px;line-height:14px;color:#d8d8d8;font-weight:normal;font-style:normal;font-family:'Liberation Sans', sans-serif;transform:scaleX(1.0490);">95</div>
<div class="a" style="left:202px;top:1007px;width:13px;height:28px;background:#3c3c3c;box-shadow:inset 0 1px 0 #4a4a4a, inset -1px 0 0 #222;"></div>
<div class="a" style="left:215px;top:1007px;width:14px;height:28px;background:#3c3c3c;box-shadow:inset 0 1px 0 #4a4a4a, inset -1px 0 0 #222;"></div>
<svg class="a" style="left:202px;top:1012px" width="28" height="16" viewBox="0 0 28 16"><path d="M9 3L4 8L9 13Z" fill="#ccc"/><path d="M10 3V13" stroke="#ccc" stroke-width="1.5"/><path d="M18 3V13" stroke="#ccc" stroke-width="1.5"/><path d="M19 3L24 8L19 13Z" fill="#ccc"/></svg>
<svg class="a" style="left:230px;top:999px" width="1445" height="40" viewBox="230 999 1445 40"><path d="M235 1023.5H1666" stroke="#bdbdbd" stroke-width="1"/><path d="M234.5 1017V1031" stroke="#d0d0d0" stroke-width="1"/><path d="M264.5 1018V1028" stroke="#bbb" stroke-width="1"/><path d="M300.5 1018V1028" stroke="#bbb" stroke-width="1"/><path d="M336.5 1018V1028" stroke="#bbb" stroke-width="1"/><path d="M372.5 1017V1031" stroke="#d0d0d0" stroke-width="1"/><path d="M408.5 1018V1028" stroke="#bbb" stroke-width="1"/><path d="M444.5 1018V1028" stroke="#bbb" stroke-width="1"/><path d="M479.5 1018V1028" stroke="#bbb" stroke-width="1"/><path d="M515.5 1017V1031" stroke="#d0d0d0" stroke-width="1"/><path d="M551.5 1018V1028" stroke="#bbb" stroke-width="1"/><path d="M587.5 1018V1028" stroke="#bbb" stroke-width="1"/><path d="M623.5 1018V1028" stroke="#bbb" stroke-width="1"/><path d="M659.5 1017V1031" stroke="#d0d0d0" stroke-width="1"/><path d="M694.5 1018V1028" stroke="#bbb" stroke-width="1"/><path d="M730.5 1018V1028" stroke="#bbb" stroke-width="1"/><path d="M766.5 1018V1028" stroke="#bbb" stroke-width="1"/><path d="M802.5 1017V1031" stroke="#d0d0d0" stroke-width="1"/><path d="M838.5 1018V1028" stroke="#bbb" stroke-width="1"/><path d="M874.5 1018V1028" stroke="#bbb" stroke-width="1"/><path d="M910.5 1018V1028" stroke="#bbb" stroke-width="1"/><path d="M945.5 1017V1031" stroke="#d0d0d0" stroke-width="1"/><path d="M981.5 1018V1028" stroke="#bbb" stroke-width="1"/><path d="M1017.5 1018V1028" stroke="#bbb" stroke-width="1"/><path d="M1053.5 1018V1028" stroke="#bbb" stroke-width="1"/><path d="M1089.5 1017V1031" stroke="#d0d0d0" stroke-width="1"/><path d="M1125.5 1018V1028" stroke="#bbb" stroke-width="1"/><path d="M1161.5 1018V1028" stroke="#bbb" stroke-width="1"/><path d="M1196.5 1018V1028" stroke="#bbb" stroke-width="1"/><path d="M1232.5 1017V1031" stroke="#d0d0d0" stroke-width="1"/><path d="M1268.5 1018V1028" stroke="#bbb" stroke-width="1"/><path d="M1304.5 1018V1028" stroke="#bbb" stroke-width="1"/><path d="M1340.5 1018V1028" stroke="#bbb" stroke-width="1"/><path d="M1376.5 1017V1031" stroke="#d0d0d0" stroke-width="1"/><path d="M1411.5 1018V1028" stroke="#bbb" stroke-width="1"/><path d="M1447.5 1018V1028" stroke="#bbb" stroke-width="1"/><path d="M1483.5 1018V1028" stroke="#bbb" stroke-width="1"/><path d="M1519.5 1017V1031" stroke="#d0d0d0" stroke-width="1"/><path d="M1555.5 1018V1028" stroke="#bbb" stroke-width="1"/><path d="M1591.5 1018V1028" stroke="#bbb" stroke-width="1"/><path d="M1627.5 1018V1028" stroke="#bbb" stroke-width="1"/><path d="M1662.5 1017V1031" stroke="#d0d0d0" stroke-width="1"/></svg>
<div class="a t" style="left:235.4px;top:999.5px;font-size:10px;line-height:12px;color:#bdbdbd;font-weight:normal;font-style:normal;font-family:'Liberation Sans', sans-serif;">1</div>
<div class="a t" style="left:372.8px;top:999.5px;font-size:10px;line-height:12px;color:#bdbdbd;font-weight:normal;font-style:normal;font-family:'Liberation Sans', sans-serif;">24</div>
<div class="a t" style="left:516.2px;top:999.5px;font-size:10px;line-height:12px;color:#bdbdbd;font-weight:normal;font-style:normal;font-family:'Liberation Sans', sans-serif;">48</div>
<div class="a t" style="left:659.6px;top:999.5px;font-size:10px;line-height:12px;color:#bdbdbd;font-weight:normal;font-style:normal;font-family:'Liberation Sans', sans-serif;">72</div>
<div class="a t" style="left:946.4px;top:999.5px;font-size:10px;line-height:12px;color:#bdbdbd;font-weight:normal;font-style:normal;font-family:'Liberation Sans', sans-serif;">120</div>
<div class="a t" style="left:1089.8px;top:999.5px;font-size:10px;line-height:12px;color:#bdbdbd;font-weight:normal;font-style:normal;font-family:'Liberation Sans', sans-serif;">144</div>
<div class="a t" style="left:1233.2px;top:999.5px;font-size:10px;line-height:12px;color:#bdbdbd;font-weight:normal;font-style:normal;font-family:'Liberation Sans', sans-serif;">168</div>
<div class="a t" style="left:1376.6px;top:999.5px;font-size:10px;line-height:12px;color:#bdbdbd;font-weight:normal;font-style:normal;font-family:'Liberation Sans', sans-serif;">192</div>
<div class="a t" style="left:1520.0px;top:999.5px;font-size:10px;line-height:12px;color:#bdbdbd;font-weight:normal;font-style:normal;font-family:'Liberation Sans', sans-serif;">216</div>
<div class="a t" style="left:803.0px;top:999.5px;font-size:10px;line-height:12px;color:#bdbdbd;font-weight:normal;font-style:normal;font-family:'Liberation Sans', sans-serif;">96</div>
<div class="a t" style="left:1662.0px;top:999.5px;font-size:10px;line-height:12px;color:#bdbdbd;font-weight:normal;font-style:normal;font-family:'Liberation Sans', sans-serif;">2</div>
<svg class="a" style="left:784px;top:1000px" width="26" height="27" viewBox="0 0 26 27"><path d="M0.7 0.7H24.7V19.7H17L12.5 24.5L8 19.7H0.7Z" fill="#0a0a0a" stroke="#e6e6e6" stroke-width="1.4"/></svg>
<div class="a t" style="left:789.5px;top:1003.5px;font-size:12px;line-height:14px;color:#f0f0f0;font-weight:normal;font-style:normal;font-family:'Liberation Sans', sans-serif;transform:scaleX(1.0115);">95</div>
<svg class="a" style="left:1668px;top:1010px" width="60" height="46" viewBox="0 0 60 46"><circle cx="23" cy="23" r="20" fill="#383838" stroke="#444" stroke-width="1"/><circle cx="27" cy="18" r="4" fill="none" stroke="#6a6a6a" stroke-width="2.2"/><path d="M24.5 21L17 30M19 27.5L22 30M21 25L23.5 27" stroke="#6a6a6a" stroke-width="2.2"/><rect x="44" y="14" width="14" height="18" fill="#3a3a3a"/><path d="M47 21L55 21L51 26Z" fill="#bbb"/></svg>
<div class="a" style="left:1733px;top:1008px;width:24px;height:24px;background:#2a2a2a;box-shadow:inset 0 0 0 1px #444;"></div>
<svg class="a" style="left:1735px;top:1010px" width="20" height="20" viewBox="0 0 20 20"><rect x="3" y="4" width="13" height="12" fill="none" stroke="#ddd" stroke-width="1.2"/><circle cx="10" cy="10" r="4" fill="none" stroke="#ddd" stroke-width="1.5"/><path d="M15 14L19 17L15 19Z" fill="#aaa"/></svg>
<div class="a" style="left:1762px;top:1008px;width:152px;height:24px;background:#3e3e3e;background:linear-gradient(#4a4a4a,#363636);box-shadow:0 1px 0 #1e1e1e;"></div>
<div class="a t" style="left:1778.0px;top:1013.0px;font-size:12px;line-height:14px;color:#d4d4d4;font-weight:normal;font-style:normal;font-family:'Liberation Sans', sans-serif;transform:scaleX(0.9050);">0 keys, 0/0 channels</div>
<div class="a tri-up" style="left:1900px;top:1016px;border-bottom-color:#bbb"></div>
<div class="a" style="left:1733px;top:1040px;width:24px;height:24px;background:#2a2a2a;box-shadow:inset 0 0 0 1px #444;"></div>
<svg class="a" style="left:1735px;top:1042px" width="20" height="20" viewBox="0 0 20 20"><rect x="3" y="3" width="14" height="14" fill="none" stroke="#ddd" stroke-width="1.2"/><path d="M3 10C6 4 9 4 10 10C11 16 14 16 17 10" fill="none" stroke="#ddd" stroke-width="1.3"/></svg>
<div class="a" style="left:1760px;top:1040px;width:152px;height:23px;background:#3f3f3f;box-shadow:inset 0 1px 0 #4c4c4c, 0 1px 0 #1f1f1f;"></div>
<div class="a" style="left:1890px;top:1040px;width:22px;height:23px;background:#363636;"></div>
<div class="a t" style="left:1774.0px;top:1044.5px;font-size:12px;line-height:14px;color:#d4d4d4;font-weight:normal;font-style:normal;font-family:'Liberation Sans', sans-serif;transform:scaleX(0.8929);">Key All Channels</div>
<div class="a" style="left:1898.5px;top:1044.5px;width:0;height:0;border-left:3.5px solid transparent;border-right:3.5px solid transparent;border-bottom:5px solid #aaa"></div>
<div class="a" style="left:1898.5px;top:1053.5px;width:0;height:0;border-left:3.5px solid transparent;border-right:3.5px solid transparent;border-top:5px solid #aaa"></div>
<div class="a" style="left:15px;top:1043px;width:28px;height:25px;background:#3c3c3c;box-shadow:inset 0 1px 0 #4a4a4a, inset -1px 0 0 #222;"></div>
<div class="a" style="left:43px;top:1043px;width:27px;height:25px;background:#3c3c3c;box-shadow:inset 0 1px 0 #4a4a4a, inset -1px 0 0 #222;"></div>
<div class="a" style="left:70px;top:1043px;width:26px;height:25px;background:#3c3c3c;box-shadow:inset 0 1px 0 #4a4a4a, inset -1px 0 0 #222;"></div>
<div class="a" style="left:96px;top:1043px;width:28px;height:25px;background:#3c3c3c;box-shadow:inset 0 1px 0 #4a4a4a, inset -1px 0 0 #222;"></div>
<div class="a" style="left:124px;top:1043px;width:26px;height:25px;background:#3c3c3c;box-shadow:inset 0 1px 0 #4a4a4a, inset -1px 0 0 #222;"></div>
<div class="a" style="left:150px;top:1043px;width:26px;height:25px;background:#3c3c3c;box-shadow:inset 0 1px 0 #4a4a4a, inset -1px 0 0 #222;"></div>
<div class="a" style="left:178px;top:1043px;width:27px;height:25px;background:#3c3c3c;box-shadow:inset 0 1px 0 #4a4a4a, inset -1px 0 0 #222;"></div>
<div class="a" style="left:205px;top:1043px;width:24px;height:25px;background:#3c3c3c;box-shadow:inset 0 1px 0 #4a4a4a, inset -1px 0 0 #222;"></div>
<svg class="a" style="left:15px;top:1042px" width="220" height="28" viewBox="15 1042 220 28">
<rect x="22" y="1049" width="12" height="15" fill="#ddd"/><path d="M30 1056L30 1068L33 1065L36 1069L37 1068L34 1064H38Z" fill="#fff" stroke="#333" stroke-width=".6"/>
<path d="M52 1052L56 1050V1062L52 1060Z" fill="#ccc"/><path d="M58 1050C61 1053 61 1059 58 1062M50 1050C47 1053 47 1059 50 1062" stroke="#ccc" stroke-width="1.3" fill="none"/>
<path d="M76 1058C76 1052 90 1052 90 1058H76" fill="none" stroke="#ddd" stroke-width="1.5"/><path d="M78 1051L74 1054L78 1057" fill="none" stroke="#ddd" stroke-width="1.5"/><path d="M88 1061L90 1063L92 1061" fill="#aaa"/>
<circle cx="110" cy="1056" r="7" fill="none" stroke="#ddd" stroke-width="1.5"/><path d="M110 1051V1056H113" stroke="#ddd" stroke-width="1.5" fill="none"/>
<path d="M128 1052V1060M132 1054V1058M136 1052V1060M140 1054V1058M144 1052V1060" stroke="#ccc" stroke-width="1.3"/><path d="M144 1062L148 1064L144 1066Z" fill="#aaa"/>
<path d="M154 1057H172" stroke="#ccc" stroke-width="1.3"/><circle cx="164" cy="1057" r="2.5" fill="#ddd"/>
<path d="M188 1050V1062M198 1050L190 1056L198 1062Z" fill="#666" stroke="#666"/><path d="M226 1050V1062M216 1050L224 1056L216 1062Z" fill="#666" stroke="#666"/>
</svg>
<div class="a" style="left:236px;top:1046px;width:42px;height:21px;background:#1e1e1e;"></div>
<div class="a t" style="left:240.0px;top:1050.3px;font-size:12px;line-height:14px;color:#d8d8d8;font-weight:normal;font-style:normal;font-family:'Liberation Mono', monospace;">1</div>
<div class="a" style="left:281px;top:1046px;width:42px;height:21px;background:#1e1e1e;"></div>
<div class="a t" style="left:285.0px;top:1050.3px;font-size:12px;line-height:14px;color:#d8d8d8;font-weight:normal;font-style:normal;font-family:'Liberation Mono', monospace;">1</div>
<div class="a" style="left:330px;top:1054px;width:1247px;height:4px;background:#6a6a6a;border-radius:1px;background:linear-gradient(#8a8a8a,#555);"></div>
<div class="a" style="left:325px;top:1049px;width:0;height:0;border-top:7px solid transparent;border-bottom:7px solid transparent;border-left:7px solid #bbb"></div>
<div class="a" style="left:1570px;top:1049px;width:0;height:0;border-top:7px solid transparent;border-bottom:7px solid transparent;border-right:7px solid #bbb"></div>
<div class="a" style="left:1580px;top:1046px;width:42px;height:21px;background:#1e1e1e;"></div>
<div class="a t" style="left:1584.0px;top:1050.3px;font-size:12px;line-height:14px;color:#d8d8d8;font-weight:normal;font-style:normal;font-family:'Liberation Mono', monospace;transform:scaleX(0.9720);">240</div>
<div class="a" style="left:1625px;top:1046px;width:43px;height:21px;background:#1e1e1e;"></div>
<div class="a t" style="left:1629.0px;top:1050.3px;font-size:12px;line-height:14px;color:#d8d8d8;font-weight:normal;font-style:normal;font-family:'Liberation Mono', monospace;transform:scaleX(0.9720);">240</div>
<svg class="a" style="left:128px;top:1000px" width="16" height="24" viewBox="0 0 16 24"><path d="M1.5 1.5V18L5.5 14.5L8.5 21L11 20L8 13.5H13Z" fill="#fff" stroke="#111" stroke-width="1"/></svg>
</body></html>
